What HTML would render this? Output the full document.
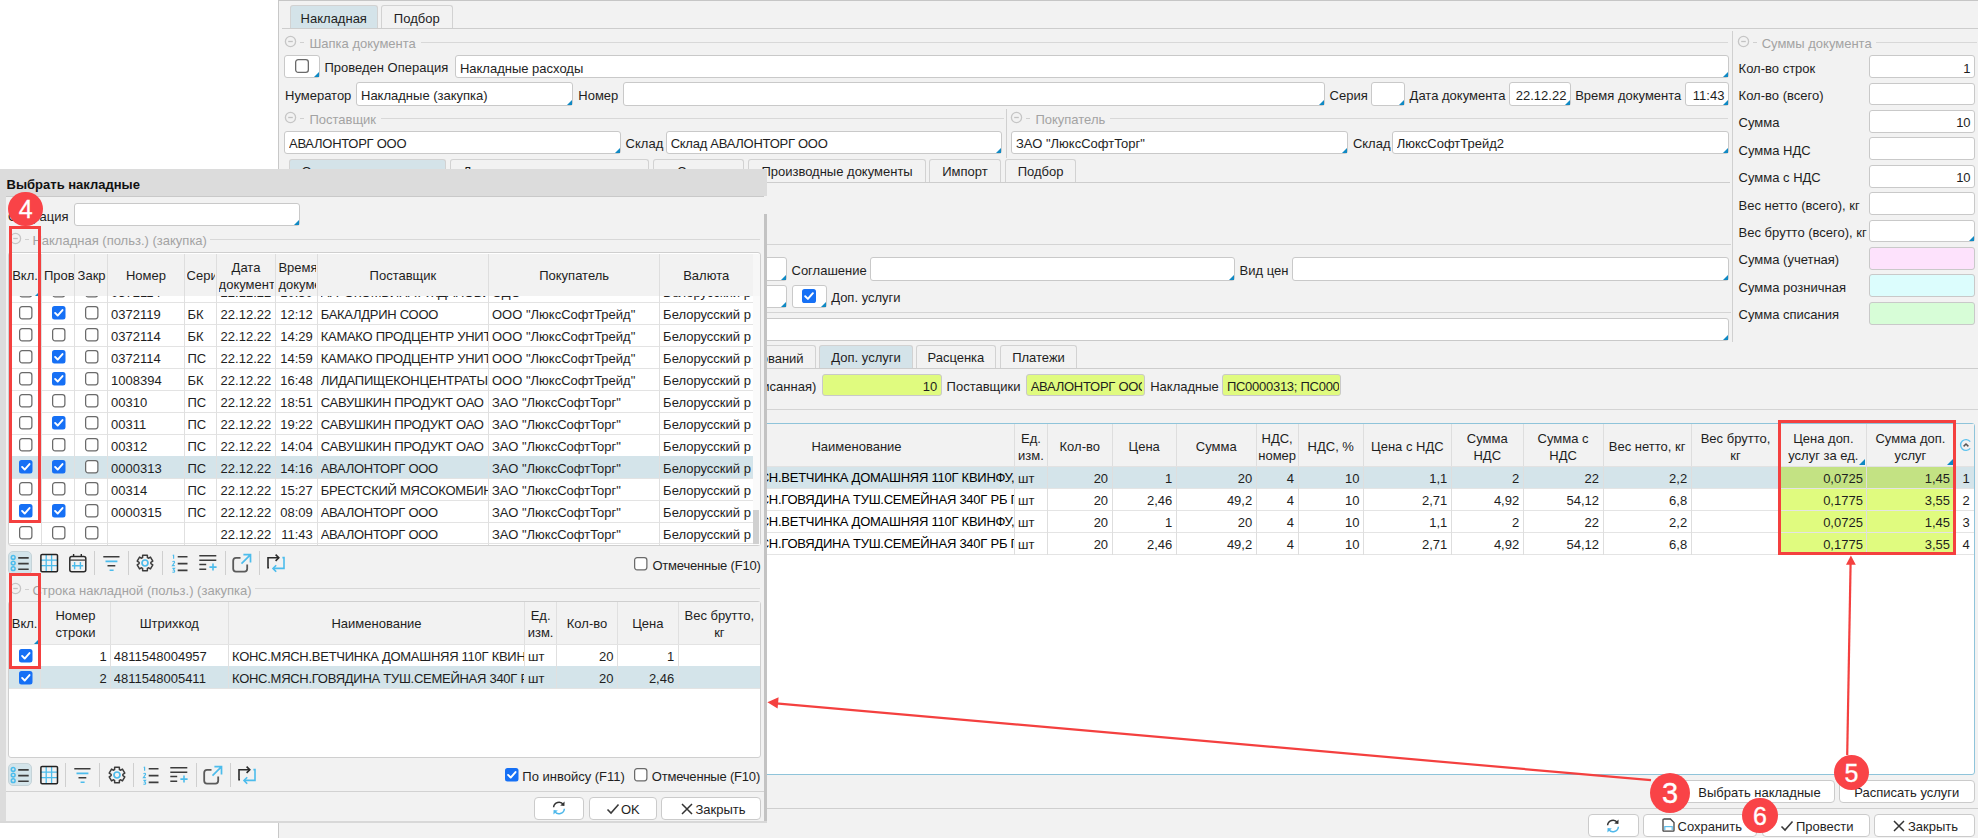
<!DOCTYPE html>
<html><head><meta charset="utf-8"><title>Выбрать накладные</title>
<style>
html,body{margin:0;padding:0;}
body{width:1978px;height:838px;overflow:hidden;position:relative;background:#fff;font-family:"Liberation Sans", sans-serif;font-size:13px;}
.a{position:absolute;}
.t{position:absolute;white-space:nowrap;line-height:22px;font-family:"Liberation Sans", sans-serif;}
svg.a{overflow:visible;}
</style></head><body>
<div class="a" style="left:278.00px;top:0.00px;width:1700.00px;height:838.00px;background:#f2f2f2;"></div>
<div class="a" style="left:278.00px;top:0.00px;width:1.00px;height:838.00px;background:#c8c8c8;"></div>
<div class="a" style="left:278.00px;top:0.00px;width:1700.00px;height:1.00px;background:#c6c6c6;"></div>
<div class="a" style="left:290.00px;top:5.00px;width:88.00px;height:24.00px;background:#d4e3e9;border:1px solid #d2d2d2;border-radius:3px 3px 0 0;border-bottom:none;box-sizing:border-box;"></div>
<div class="t" style="top:7.70px;font-size:13px;color:#1e1e1e;left:133.75px;width:400px;text-align:center;">Накладная</div>
<div class="a" style="left:381.00px;top:5.00px;width:72.00px;height:24.00px;background:#f2f2f2;border:1px solid #d2d2d2;border-radius:3px 3px 0 0;border-bottom:none;box-sizing:border-box;"></div>
<div class="t" style="top:7.70px;font-size:13px;color:#1e1e1e;left:216.75px;width:400px;text-align:center;">Подбор</div>
<div class="a" style="left:282.00px;top:28.00px;width:1696.00px;height:1.00px;background:#cdcdcd;"></div>
<svg class="a" style="left:284.30px;top:35.10px" width="13" height="13" viewBox="0 0 13 13"><circle cx="6.5" cy="6.5" r="5.1" fill="none" stroke="#c6c6c6" stroke-width="1.3"/><path d="M4.2 6.5 H8.8" stroke="#c2c2c2" stroke-width="1.3"/></svg>
<div class="a" style="left:300.00px;top:42.00px;width:4.00px;height:1.00px;background:#d0d0d0;"></div>
<div class="t" style="top:33.10px;font-size:13px;color:#a3a3a3;left:309.40px;">Шапка документа</div>
<div class="a" style="left:421.00px;top:42.00px;width:1307.00px;height:1.00px;background:#d8d8d8;"></div>
<div class="a" style="left:1732.00px;top:31.00px;width:1.00px;height:311.00px;background:#d0d0d0;"></div>
<svg class="a" style="left:1737.10px;top:35.10px" width="13" height="13" viewBox="0 0 13 13"><circle cx="6.5" cy="6.5" r="5.1" fill="none" stroke="#c6c6c6" stroke-width="1.3"/><path d="M4.2 6.5 H8.8" stroke="#c2c2c2" stroke-width="1.3"/></svg>
<div class="a" style="left:1753.00px;top:42.00px;width:4.00px;height:1.00px;background:#d0d0d0;"></div>
<div class="t" style="top:33.10px;font-size:13px;color:#a3a3a3;left:1761.70px;">Суммы документа</div>
<div class="a" style="left:1876.00px;top:42.00px;width:101.00px;height:1.00px;background:#d8d8d8;"></div>
<div class="a" style="left:284.00px;top:55.00px;width:36.00px;height:23.00px;background:#fff;border:1px solid #c9c9c9;border-radius:3px;box-sizing:border-box;"></div>
<div class="a" style="left:314.00px;top:72.00px;width:0;height:0;border-left:5px solid transparent;border-bottom:5px solid #0f89c4;"></div>
<svg class="a" style="left:295.30px;top:59.20px" width="14" height="14" viewBox="0 0 14 14"><rect x="0.65" y="0.65" width="12.7" height="12.7" rx="2.6" fill="#fff" stroke="#6a6a6a" stroke-width="1.3"/></svg>
<div class="t" style="top:57.40px;font-size:13px;color:#1e1e1e;left:324.50px;">Проведен Операция</div>
<div class="a" style="left:455.00px;top:55.00px;width:1274.00px;height:23.00px;background:#fff;border:1px solid #c9c9c9;border-radius:3px;box-sizing:border-box;"></div>
<div class="t" style="top:57.60px;font-size:13px;color:#1e1e1e;left:459.90px;width:1266.50px;overflow:hidden;">Накладные расходы</div>
<div class="a" style="left:1723.00px;top:72.00px;width:0;height:0;border-left:5px solid transparent;border-bottom:5px solid #0f89c4;"></div>
<div class="t" style="top:84.70px;font-size:13px;color:#1e1e1e;left:285.00px;">Нумератор</div>
<div class="a" style="left:356.00px;top:82.00px;width:217.00px;height:24.00px;background:#fff;border:1px solid #c9c9c9;border-radius:3px;box-sizing:border-box;"></div>
<div class="t" style="top:84.85px;font-size:13px;color:#1e1e1e;left:361.00px;width:209.30px;overflow:hidden;">Накладные (закупка)</div>
<div class="a" style="left:567.00px;top:100.00px;width:0;height:0;border-left:5px solid transparent;border-bottom:5px solid #0f89c4;"></div>
<div class="t" style="top:84.70px;font-size:13px;color:#1e1e1e;left:578.30px;">Номер</div>
<div class="a" style="left:623.00px;top:82.00px;width:702.00px;height:24.00px;background:#fff;border:1px solid #c9c9c9;border-radius:3px;box-sizing:border-box;"></div>
<div class="a" style="left:1319.00px;top:100.00px;width:0;height:0;border-left:5px solid transparent;border-bottom:5px solid #0f89c4;"></div>
<div class="t" style="top:84.70px;font-size:13px;color:#1e1e1e;left:1329.60px;">Серия</div>
<div class="a" style="left:1371.00px;top:82.00px;width:34.00px;height:24.00px;background:#fff;border:1px solid #c9c9c9;border-radius:3px;box-sizing:border-box;"></div>
<div class="a" style="left:1399.00px;top:100.00px;width:0;height:0;border-left:5px solid transparent;border-bottom:5px solid #0f89c4;"></div>
<div class="t" style="top:84.70px;font-size:13px;color:#1e1e1e;left:1409.60px;">Дата документа</div>
<div class="a" style="left:1509.00px;top:82.00px;width:62.00px;height:24.00px;background:#fff;border:1px solid #c9c9c9;border-radius:3px;box-sizing:border-box;"></div>
<div class="t" style="top:84.85px;font-size:13px;color:#1e1e1e;left:1166.40px;width:400px;text-align:right;">22.12.22</div>
<div class="a" style="left:1565.00px;top:100.00px;width:0;height:0;border-left:5px solid transparent;border-bottom:5px solid #0f89c4;"></div>
<div class="t" style="top:84.70px;font-size:13px;color:#1e1e1e;left:1575.20px;">Время документа</div>
<div class="a" style="left:1685.00px;top:82.00px;width:44.00px;height:24.00px;background:#fff;border:1px solid #c9c9c9;border-radius:3px;box-sizing:border-box;"></div>
<div class="t" style="top:84.85px;font-size:13px;color:#1e1e1e;left:1324.40px;width:400px;text-align:right;">11:43</div>
<div class="a" style="left:1723.00px;top:100.00px;width:0;height:0;border-left:5px solid transparent;border-bottom:5px solid #0f89c4;"></div>
<svg class="a" style="left:284.30px;top:111.40px" width="13" height="13" viewBox="0 0 13 13"><circle cx="6.5" cy="6.5" r="5.1" fill="none" stroke="#c6c6c6" stroke-width="1.3"/><path d="M4.2 6.5 H8.8" stroke="#c2c2c2" stroke-width="1.3"/></svg>
<div class="a" style="left:300.00px;top:118.00px;width:4.00px;height:1.00px;background:#d0d0d0;"></div>
<div class="t" style="top:109.40px;font-size:13px;color:#a3a3a3;left:309.40px;">Поставщик</div>
<div class="a" style="left:381.00px;top:118.00px;width:623.00px;height:1.00px;background:#d8d8d8;"></div>
<div class="a" style="left:1006.00px;top:109.00px;width:1.00px;height:49.00px;background:#d0d0d0;"></div>
<svg class="a" style="left:1010.40px;top:111.40px" width="13" height="13" viewBox="0 0 13 13"><circle cx="6.5" cy="6.5" r="5.1" fill="none" stroke="#c6c6c6" stroke-width="1.3"/><path d="M4.2 6.5 H8.8" stroke="#c2c2c2" stroke-width="1.3"/></svg>
<div class="a" style="left:1026.00px;top:118.00px;width:4.00px;height:1.00px;background:#d0d0d0;"></div>
<div class="t" style="top:109.40px;font-size:13px;color:#a3a3a3;left:1035.40px;">Покупатель</div>
<div class="a" style="left:1110.00px;top:118.00px;width:618.00px;height:1.00px;background:#d8d8d8;"></div>
<div class="a" style="left:284.00px;top:131.00px;width:337.00px;height:23.00px;background:#fff;border:1px solid #c9c9c9;border-radius:3px;box-sizing:border-box;"></div>
<div class="t" style="top:133.40px;font-size:13px;color:#1e1e1e;letter-spacing:-0.27px;left:289.00px;width:329.30px;overflow:hidden;">АВАЛОНТОРГ ООО</div>
<div class="a" style="left:615.00px;top:148.00px;width:0;height:0;border-left:5px solid transparent;border-bottom:5px solid #0f89c4;"></div>
<div class="t" style="top:133.40px;font-size:13px;color:#1e1e1e;left:625.60px;">Склад</div>
<div class="a" style="left:666.00px;top:131.00px;width:336.00px;height:23.00px;background:#fff;border:1px solid #c9c9c9;border-radius:3px;box-sizing:border-box;"></div>
<div class="t" style="top:133.40px;font-size:13px;color:#1e1e1e;letter-spacing:-0.27px;left:670.70px;width:329.00px;overflow:hidden;">Склад АВАЛОНТОРГ ООО</div>
<div class="a" style="left:996.00px;top:148.00px;width:0;height:0;border-left:5px solid transparent;border-bottom:5px solid #0f89c4;"></div>
<div class="a" style="left:1011.00px;top:131.00px;width:337.00px;height:23.00px;background:#fff;border:1px solid #c9c9c9;border-radius:3px;box-sizing:border-box;"></div>
<div class="t" style="top:133.40px;font-size:13px;color:#1e1e1e;left:1016.00px;width:329.50px;overflow:hidden;">ЗАО "ЛюксСофтТорг"</div>
<div class="a" style="left:1342.00px;top:148.00px;width:0;height:0;border-left:5px solid transparent;border-bottom:5px solid #0f89c4;"></div>
<div class="t" style="top:133.40px;font-size:13px;color:#1e1e1e;left:1352.90px;">Склад</div>
<div class="a" style="left:1392.00px;top:131.00px;width:337.00px;height:23.00px;background:#fff;border:1px solid #c9c9c9;border-radius:3px;box-sizing:border-box;"></div>
<div class="t" style="top:133.40px;font-size:13px;color:#1e1e1e;left:1396.70px;width:329.70px;overflow:hidden;">ЛюксСофтТрейд2</div>
<div class="a" style="left:1723.00px;top:148.00px;width:0;height:0;border-left:5px solid transparent;border-bottom:5px solid #0f89c4;"></div>
<div class="a" style="left:289.00px;top:159.00px;width:157.00px;height:24.00px;background:#d4e3e9;border:1px solid #d2d2d2;border-radius:3px 3px 0 0;border-bottom:none;box-sizing:border-box;"></div>
<div class="t" style="top:161.45px;font-size:13px;color:#1e1e1e;left:167.60px;width:400px;text-align:center;">Основные параметры</div>
<div class="a" style="left:450.00px;top:159.00px;width:199.00px;height:24.00px;background:#f2f2f2;border:1px solid #d2d2d2;border-radius:3px 3px 0 0;border-bottom:none;box-sizing:border-box;"></div>
<div class="t" style="top:161.45px;font-size:13px;color:#1e1e1e;left:349.40px;width:400px;text-align:center;">Дополнительные параметры</div>
<div class="a" style="left:653.00px;top:159.00px;width:91.00px;height:24.00px;background:#f2f2f2;border:1px solid #d2d2d2;border-radius:3px 3px 0 0;border-bottom:none;box-sizing:border-box;"></div>
<div class="t" style="top:161.45px;font-size:13px;color:#1e1e1e;left:498.50px;width:400px;text-align:center;">Скидки</div>
<div class="a" style="left:748.00px;top:159.00px;width:178.00px;height:24.00px;background:#f2f2f2;border:1px solid #d2d2d2;border-radius:3px 3px 0 0;border-bottom:none;box-sizing:border-box;"></div>
<div class="t" style="top:161.45px;font-size:13px;color:#1e1e1e;left:637.05px;width:400px;text-align:center;">Производные документы</div>
<div class="a" style="left:929.00px;top:159.00px;width:72.00px;height:24.00px;background:#f2f2f2;border:1px solid #d2d2d2;border-radius:3px 3px 0 0;border-bottom:none;box-sizing:border-box;"></div>
<div class="t" style="top:161.45px;font-size:13px;color:#1e1e1e;left:765.00px;width:400px;text-align:center;">Импорт</div>
<div class="a" style="left:1005.00px;top:159.00px;width:71.00px;height:24.00px;background:#f2f2f2;border:1px solid #d2d2d2;border-radius:3px 3px 0 0;border-bottom:none;box-sizing:border-box;"></div>
<div class="t" style="top:161.45px;font-size:13px;color:#1e1e1e;left:840.60px;width:400px;text-align:center;">Подбор</div>
<div class="a" style="left:282.00px;top:182.00px;width:1448.00px;height:1.00px;background:#cdcdcd;"></div>
<div class="t" style="top:57.65px;font-size:13px;color:#1e1e1e;left:1738.60px;">Кол-во строк</div>
<div class="a" style="left:1869.00px;top:55.00px;width:106.00px;height:23.00px;background:#fff;border:1px solid #c9c9c9;border-radius:3px;box-sizing:border-box;"></div>
<div class="t" style="top:57.55px;font-size:13px;color:#1e1e1e;left:1570.60px;width:400px;text-align:right;">1</div>
<div class="t" style="top:85.05px;font-size:13px;color:#1e1e1e;left:1738.60px;">Кол-во (всего)</div>
<div class="a" style="left:1869.00px;top:83.00px;width:106.00px;height:22.00px;background:#fff;border:1px solid #c9c9c9;border-radius:3px;box-sizing:border-box;"></div>
<div class="t" style="top:112.45px;font-size:13px;color:#1e1e1e;left:1738.60px;">Сумма</div>
<div class="a" style="left:1869.00px;top:110.00px;width:106.00px;height:23.00px;background:#fff;border:1px solid #c9c9c9;border-radius:3px;box-sizing:border-box;"></div>
<div class="t" style="top:112.35px;font-size:13px;color:#1e1e1e;left:1570.60px;width:400px;text-align:right;">10</div>
<div class="t" style="top:139.85px;font-size:13px;color:#1e1e1e;left:1738.60px;">Сумма НДС</div>
<div class="a" style="left:1869.00px;top:137.00px;width:106.00px;height:23.00px;background:#fff;border:1px solid #c9c9c9;border-radius:3px;box-sizing:border-box;"></div>
<div class="t" style="top:167.25px;font-size:13px;color:#1e1e1e;left:1738.60px;">Сумма с НДС</div>
<div class="a" style="left:1869.00px;top:165.00px;width:106.00px;height:23.00px;background:#fff;border:1px solid #c9c9c9;border-radius:3px;box-sizing:border-box;"></div>
<div class="t" style="top:167.15px;font-size:13px;color:#1e1e1e;left:1570.60px;width:400px;text-align:right;">10</div>
<div class="t" style="top:194.65px;font-size:13px;color:#1e1e1e;left:1738.60px;">Вес нетто (всего), кг</div>
<div class="a" style="left:1869.00px;top:192.00px;width:106.00px;height:23.00px;background:#fff;border:1px solid #c9c9c9;border-radius:3px;box-sizing:border-box;"></div>
<div class="t" style="top:222.05px;font-size:13px;color:#1e1e1e;left:1738.60px;">Вес брутто (всего), кг</div>
<div class="a" style="left:1869.00px;top:220.00px;width:106.00px;height:22.00px;background:#fff;border:1px solid #c9c9c9;border-radius:3px;box-sizing:border-box;"></div>
<div class="a" style="left:1969.00px;top:236.00px;width:0;height:0;border-left:5px solid transparent;border-bottom:5px solid #0f89c4;"></div>
<div class="t" style="top:249.45px;font-size:13px;color:#1e1e1e;left:1738.60px;">Сумма (учетная)</div>
<div class="a" style="left:1869.00px;top:247.00px;width:106.00px;height:23.00px;background:#fde2fc;border:1px solid #c9c9c9;border-radius:3px;box-sizing:border-box;"></div>
<div class="t" style="top:276.85px;font-size:13px;color:#1e1e1e;left:1738.60px;">Сумма розничная</div>
<div class="a" style="left:1869.00px;top:274.00px;width:106.00px;height:23.00px;background:#dcfdfd;border:1px solid #c9c9c9;border-radius:3px;box-sizing:border-box;"></div>
<div class="t" style="top:304.25px;font-size:13px;color:#1e1e1e;left:1738.60px;">Сумма списания</div>
<div class="a" style="left:1869.00px;top:302.00px;width:106.00px;height:23.00px;background:#d7fdd7;border:1px solid #c9c9c9;border-radius:3px;box-sizing:border-box;"></div>
<div class="a" style="left:766.00px;top:244.00px;width:965.00px;height:1.00px;background:#d4d4d4;"></div>
<div class="a" style="left:700.00px;top:257.00px;width:87.00px;height:24.00px;background:#fff;border:1px solid #c9c9c9;border-radius:3px;box-sizing:border-box;"></div>
<div class="a" style="left:781.00px;top:275.00px;width:0;height:0;border-left:5px solid transparent;border-bottom:5px solid #0f89c4;"></div>
<div class="t" style="top:259.60px;font-size:13px;color:#1e1e1e;left:791.50px;">Соглашение</div>
<div class="a" style="left:870.00px;top:257.00px;width:365.00px;height:24.00px;background:#fff;border:1px solid #c9c9c9;border-radius:3px;box-sizing:border-box;"></div>
<div class="a" style="left:1229.00px;top:275.00px;width:0;height:0;border-left:5px solid transparent;border-bottom:5px solid #0f89c4;"></div>
<div class="t" style="top:259.60px;font-size:13px;color:#1e1e1e;left:1239.60px;">Вид цен</div>
<div class="a" style="left:1292.00px;top:257.00px;width:437.00px;height:24.00px;background:#fff;border:1px solid #c9c9c9;border-radius:3px;box-sizing:border-box;"></div>
<div class="a" style="left:1723.00px;top:275.00px;width:0;height:0;border-left:5px solid transparent;border-bottom:5px solid #0f89c4;"></div>
<div class="a" style="left:700.00px;top:285.00px;width:87.00px;height:23.00px;background:#fff;border:1px solid #c9c9c9;border-radius:3px;box-sizing:border-box;"></div>
<div class="a" style="left:781.00px;top:302.00px;width:0;height:0;border-left:5px solid transparent;border-bottom:5px solid #0f89c4;"></div>
<div class="a" style="left:792.00px;top:285.00px;width:35.00px;height:23.00px;background:#fff;border:1px solid #c9c9c9;border-radius:3px;box-sizing:border-box;"></div>
<div class="a" style="left:821.00px;top:302.00px;width:0;height:0;border-left:5px solid transparent;border-bottom:5px solid #0f89c4;"></div>
<svg class="a" style="left:802.10px;top:289.10px" width="14" height="14" viewBox="0 0 14 14"><rect x="0" y="0" width="14" height="14" rx="2.6" fill="#1670f5"/><path d="M3.2 7.2 L5.9 9.9 L10.9 4.2" stroke="#fff" stroke-width="2" fill="none" stroke-linecap="round" stroke-linejoin="round"/></svg>
<div class="t" style="top:287.30px;font-size:13px;color:#1e1e1e;left:831.20px;">Доп. услуги</div>
<div class="a" style="left:766.00px;top:312.00px;width:965.00px;height:1.00px;background:#d4d4d4;"></div>
<div class="a" style="left:700.00px;top:318.00px;width:1029.00px;height:23.00px;background:#fff;border:1px solid #c9c9c9;border-radius:3px;box-sizing:border-box;"></div>
<div class="a" style="left:1723.00px;top:335.00px;width:0;height:0;border-left:5px solid transparent;border-bottom:5px solid #0f89c4;"></div>
<div class="a" style="left:700.00px;top:345.00px;width:116.00px;height:24.00px;background:#f2f2f2;border:1px solid #d2d2d2;border-radius:3px 3px 0 0;border-bottom:none;box-sizing:border-box;"></div>
<div class="t" style="top:347.50px;font-size:13px;color:#1e1e1e;left:403.60px;width:400px;text-align:right;">Список наименований</div>
<div class="a" style="left:819.00px;top:345.00px;width:94.00px;height:24.00px;background:#d4e3e9;border:1px solid #d2d2d2;border-radius:3px 3px 0 0;border-bottom:none;box-sizing:border-box;"></div>
<div class="t" style="top:347.45px;font-size:13px;color:#1e1e1e;left:666.05px;width:400px;text-align:center;">Доп. услуги</div>
<div class="a" style="left:916.00px;top:345.00px;width:80.00px;height:24.00px;background:#f2f2f2;border:1px solid #d2d2d2;border-radius:3px 3px 0 0;border-bottom:none;box-sizing:border-box;"></div>
<div class="t" style="top:347.45px;font-size:13px;color:#1e1e1e;left:755.90px;width:400px;text-align:center;">Расценка</div>
<div class="a" style="left:1000.00px;top:345.00px;width:77.00px;height:24.00px;background:#f2f2f2;border:1px solid #d2d2d2;border-radius:3px 3px 0 0;border-bottom:none;box-sizing:border-box;"></div>
<div class="t" style="top:347.45px;font-size:13px;color:#1e1e1e;left:838.50px;width:400px;text-align:center;">Платежи</div>
<div class="a" style="left:766.00px;top:368.00px;width:1212.00px;height:1.00px;background:#cdcdcd;"></div>
<div class="t" style="top:376.40px;font-size:13px;color:#1e1e1e;left:416.30px;width:400px;text-align:right;">Сумма (расписанная)</div>
<div class="a" style="left:822.00px;top:374.00px;width:120.00px;height:22.00px;background:#e0fb7f;border:1px solid #c9c9c9;border-radius:3px;box-sizing:border-box;"></div>
<div class="t" style="top:376.20px;font-size:13px;color:#1e1e1e;left:537.20px;width:400px;text-align:right;">10</div>
<div class="t" style="top:376.40px;font-size:13px;color:#1e1e1e;left:946.60px;">Поставщики</div>
<div class="a" style="left:1026.00px;top:374.00px;width:119.00px;height:22.00px;background:#e0fb7f;border:1px solid #c9c9c9;border-radius:3px;box-sizing:border-box;"></div>
<div class="t" style="top:376.20px;font-size:13px;color:#1e1e1e;letter-spacing:-0.27px;left:1030.70px;width:111.60px;overflow:hidden;">АВАЛОНТОРГ ООО</div>
<div class="t" style="top:376.40px;font-size:13px;color:#1e1e1e;left:1150.20px;">Накладные</div>
<div class="a" style="left:1222.00px;top:374.00px;width:119.00px;height:22.00px;background:#e0fb7f;border:1px solid #c9c9c9;border-radius:3px;box-sizing:border-box;"></div>
<div class="t" style="top:376.20px;font-size:13px;color:#1e1e1e;letter-spacing:-0.27px;left:1226.90px;width:111.80px;overflow:hidden;">ПС0000313; ПС0000315</div>
<div class="a" style="left:766.00px;top:409.00px;width:1212.00px;height:1.00px;background:#d4d4d4;"></div>
<div class="a" style="left:500.00px;top:423.00px;width:1475.00px;height:352.00px;background:#fff;border:1px solid #8fc4da;border-radius:3px;box-sizing:border-box;"></div>
<div class="a" style="left:501.00px;top:424.00px;width:1473.00px;height:43.00px;background:#f2f2f2;"></div>
<div class="a" style="left:501.00px;top:467.00px;width:1473.00px;height:22.00px;background:#d4e4ea;"></div>
<div class="a" style="left:1780.00px;top:467.00px;width:174.00px;height:22.00px;background:#c3e283;"></div>
<div class="a" style="left:501.00px;top:488.00px;width:1473.00px;height:1.00px;background:#e4e4e4;"></div>
<div class="t" style="left:700px;top:467.40px;width:314.20px;overflow:hidden;"><span style="position:relative;left:1.3px;letter-spacing:-0.25px">КОНС.МЯСН.ВЕТЧИНКА ДОМАШНЯЯ 110Г КВИНФУ, ГП</span></div>
<div class="t" style="top:468.30px;font-size:13px;color:#1e1e1e;left:1018.10px;">шт</div>
<div class="t" style="top:468.30px;font-size:13px;color:#1e1e1e;left:708.10px;width:400px;text-align:right;">20</div>
<div class="t" style="top:468.30px;font-size:13px;color:#1e1e1e;left:772.30px;width:400px;text-align:right;">1</div>
<div class="t" style="top:468.30px;font-size:13px;color:#1e1e1e;left:852.20px;width:400px;text-align:right;">20</div>
<div class="t" style="top:468.30px;font-size:13px;color:#1e1e1e;left:894.10px;width:400px;text-align:right;">4</div>
<div class="t" style="top:468.30px;font-size:13px;color:#1e1e1e;left:959.40px;width:400px;text-align:right;">10</div>
<div class="t" style="top:468.30px;font-size:13px;color:#1e1e1e;left:1047.30px;width:400px;text-align:right;">1,1</div>
<div class="t" style="top:468.30px;font-size:13px;color:#1e1e1e;left:1119.20px;width:400px;text-align:right;">2</div>
<div class="t" style="top:468.30px;font-size:13px;color:#1e1e1e;left:1199.00px;width:400px;text-align:right;">22</div>
<div class="t" style="top:468.30px;font-size:13px;color:#1e1e1e;left:1287.20px;width:400px;text-align:right;">2,2</div>
<div class="t" style="top:468.30px;font-size:13px;color:#1e1e1e;left:1462.90px;width:400px;text-align:right;">0,0725</div>
<div class="t" style="top:468.30px;font-size:13px;color:#1e1e1e;left:1550.00px;width:400px;text-align:right;">1,45</div>
<div class="t" style="top:468.30px;font-size:13px;color:#1e1e1e;left:1962.50px;">1</div>
<div class="a" style="left:1780.00px;top:489.00px;width:174.00px;height:22.00px;background:#e0fb7f;"></div>
<div class="a" style="left:501.00px;top:510.00px;width:1473.00px;height:1.00px;background:#e4e4e4;"></div>
<div class="t" style="left:700px;top:489.40px;width:314.20px;overflow:hidden;"><span style="position:relative;left:1.3px;letter-spacing:-0.25px">КОНС.МЯСН.ГОВЯДИНА ТУШ.СЕМЕЙНАЯ 340Г РБ ГР</span></div>
<div class="t" style="top:490.30px;font-size:13px;color:#1e1e1e;left:1018.10px;">шт</div>
<div class="t" style="top:490.30px;font-size:13px;color:#1e1e1e;left:708.10px;width:400px;text-align:right;">20</div>
<div class="t" style="top:490.30px;font-size:13px;color:#1e1e1e;left:772.30px;width:400px;text-align:right;">2,46</div>
<div class="t" style="top:490.30px;font-size:13px;color:#1e1e1e;left:852.20px;width:400px;text-align:right;">49,2</div>
<div class="t" style="top:490.30px;font-size:13px;color:#1e1e1e;left:894.10px;width:400px;text-align:right;">4</div>
<div class="t" style="top:490.30px;font-size:13px;color:#1e1e1e;left:959.40px;width:400px;text-align:right;">10</div>
<div class="t" style="top:490.30px;font-size:13px;color:#1e1e1e;left:1047.30px;width:400px;text-align:right;">2,71</div>
<div class="t" style="top:490.30px;font-size:13px;color:#1e1e1e;left:1119.20px;width:400px;text-align:right;">4,92</div>
<div class="t" style="top:490.30px;font-size:13px;color:#1e1e1e;left:1199.00px;width:400px;text-align:right;">54,12</div>
<div class="t" style="top:490.30px;font-size:13px;color:#1e1e1e;left:1287.20px;width:400px;text-align:right;">6,8</div>
<div class="t" style="top:490.30px;font-size:13px;color:#1e1e1e;left:1462.90px;width:400px;text-align:right;">0,1775</div>
<div class="t" style="top:490.30px;font-size:13px;color:#1e1e1e;left:1550.00px;width:400px;text-align:right;">3,55</div>
<div class="t" style="top:490.30px;font-size:13px;color:#1e1e1e;left:1962.50px;">2</div>
<div class="a" style="left:1780.00px;top:511.00px;width:174.00px;height:22.00px;background:#e0fb7f;"></div>
<div class="a" style="left:501.00px;top:532.00px;width:1473.00px;height:1.00px;background:#e4e4e4;"></div>
<div class="t" style="left:700px;top:511.40px;width:314.20px;overflow:hidden;"><span style="position:relative;left:1.3px;letter-spacing:-0.25px">КОНС.МЯСН.ВЕТЧИНКА ДОМАШНЯЯ 110Г КВИНФУ, ГП</span></div>
<div class="t" style="top:512.30px;font-size:13px;color:#1e1e1e;left:1018.10px;">шт</div>
<div class="t" style="top:512.30px;font-size:13px;color:#1e1e1e;left:708.10px;width:400px;text-align:right;">20</div>
<div class="t" style="top:512.30px;font-size:13px;color:#1e1e1e;left:772.30px;width:400px;text-align:right;">1</div>
<div class="t" style="top:512.30px;font-size:13px;color:#1e1e1e;left:852.20px;width:400px;text-align:right;">20</div>
<div class="t" style="top:512.30px;font-size:13px;color:#1e1e1e;left:894.10px;width:400px;text-align:right;">4</div>
<div class="t" style="top:512.30px;font-size:13px;color:#1e1e1e;left:959.40px;width:400px;text-align:right;">10</div>
<div class="t" style="top:512.30px;font-size:13px;color:#1e1e1e;left:1047.30px;width:400px;text-align:right;">1,1</div>
<div class="t" style="top:512.30px;font-size:13px;color:#1e1e1e;left:1119.20px;width:400px;text-align:right;">2</div>
<div class="t" style="top:512.30px;font-size:13px;color:#1e1e1e;left:1199.00px;width:400px;text-align:right;">22</div>
<div class="t" style="top:512.30px;font-size:13px;color:#1e1e1e;left:1287.20px;width:400px;text-align:right;">2,2</div>
<div class="t" style="top:512.30px;font-size:13px;color:#1e1e1e;left:1462.90px;width:400px;text-align:right;">0,0725</div>
<div class="t" style="top:512.30px;font-size:13px;color:#1e1e1e;left:1550.00px;width:400px;text-align:right;">1,45</div>
<div class="t" style="top:512.30px;font-size:13px;color:#1e1e1e;left:1962.50px;">3</div>
<div class="a" style="left:1780.00px;top:533.00px;width:174.00px;height:22.00px;background:#e0fb7f;"></div>
<div class="a" style="left:501.00px;top:554.00px;width:1473.00px;height:1.00px;background:#e4e4e4;"></div>
<div class="t" style="left:700px;top:533.40px;width:314.20px;overflow:hidden;"><span style="position:relative;left:1.3px;letter-spacing:-0.25px">КОНС.МЯСН.ГОВЯДИНА ТУШ.СЕМЕЙНАЯ 340Г РБ ГР</span></div>
<div class="t" style="top:534.30px;font-size:13px;color:#1e1e1e;left:1018.10px;">шт</div>
<div class="t" style="top:534.30px;font-size:13px;color:#1e1e1e;left:708.10px;width:400px;text-align:right;">20</div>
<div class="t" style="top:534.30px;font-size:13px;color:#1e1e1e;left:772.30px;width:400px;text-align:right;">2,46</div>
<div class="t" style="top:534.30px;font-size:13px;color:#1e1e1e;left:852.20px;width:400px;text-align:right;">49,2</div>
<div class="t" style="top:534.30px;font-size:13px;color:#1e1e1e;left:894.10px;width:400px;text-align:right;">4</div>
<div class="t" style="top:534.30px;font-size:13px;color:#1e1e1e;left:959.40px;width:400px;text-align:right;">10</div>
<div class="t" style="top:534.30px;font-size:13px;color:#1e1e1e;left:1047.30px;width:400px;text-align:right;">2,71</div>
<div class="t" style="top:534.30px;font-size:13px;color:#1e1e1e;left:1119.20px;width:400px;text-align:right;">4,92</div>
<div class="t" style="top:534.30px;font-size:13px;color:#1e1e1e;left:1199.00px;width:400px;text-align:right;">54,12</div>
<div class="t" style="top:534.30px;font-size:13px;color:#1e1e1e;left:1287.20px;width:400px;text-align:right;">6,8</div>
<div class="t" style="top:534.30px;font-size:13px;color:#1e1e1e;left:1462.90px;width:400px;text-align:right;">0,1775</div>
<div class="t" style="top:534.30px;font-size:13px;color:#1e1e1e;left:1550.00px;width:400px;text-align:right;">3,55</div>
<div class="t" style="top:534.30px;font-size:13px;color:#1e1e1e;left:1962.50px;">4</div>
<div class="a" style="left:1014.00px;top:424.00px;width:1.00px;height:131.00px;background:#dedede;"></div>
<div class="a" style="left:1047.00px;top:424.00px;width:1.00px;height:131.00px;background:#dedede;"></div>
<div class="a" style="left:1112.00px;top:424.00px;width:1.00px;height:131.00px;background:#dedede;"></div>
<div class="a" style="left:1176.00px;top:424.00px;width:1.00px;height:131.00px;background:#dedede;"></div>
<div class="a" style="left:1256.00px;top:424.00px;width:1.00px;height:131.00px;background:#dedede;"></div>
<div class="a" style="left:1298.00px;top:424.00px;width:1.00px;height:131.00px;background:#dedede;"></div>
<div class="a" style="left:1363.00px;top:424.00px;width:1.00px;height:131.00px;background:#dedede;"></div>
<div class="a" style="left:1451.00px;top:424.00px;width:1.00px;height:131.00px;background:#dedede;"></div>
<div class="a" style="left:1523.00px;top:424.00px;width:1.00px;height:131.00px;background:#dedede;"></div>
<div class="a" style="left:1603.00px;top:424.00px;width:1.00px;height:131.00px;background:#dedede;"></div>
<div class="a" style="left:1691.00px;top:424.00px;width:1.00px;height:131.00px;background:#dedede;"></div>
<div class="a" style="left:1779.00px;top:424.00px;width:1.00px;height:131.00px;background:#dedede;"></div>
<div class="a" style="left:1866.00px;top:424.00px;width:1.00px;height:131.00px;background:#dedede;"></div>
<div class="a" style="left:1954.00px;top:424.00px;width:1.00px;height:131.00px;background:#dedede;"></div>
<div class="a" style="left:501.00px;top:466.00px;width:1473.00px;height:1.00px;background:#e2e2e2;"></div>
<div class="t" style="top:435.60px;font-size:13px;color:#1e1e1e;left:656.50px;width:400px;text-align:center;">Наименование</div>
<div class="t" style="top:427.60px;font-size:13px;color:#1e1e1e;left:831.00px;width:400px;text-align:center;">Ед.</div>
<div class="t" style="top:444.60px;font-size:13px;color:#1e1e1e;left:831.00px;width:400px;text-align:center;">изм.</div>
<div class="t" style="top:435.60px;font-size:13px;color:#1e1e1e;left:879.75px;width:400px;text-align:center;">Кол-во</div>
<div class="t" style="top:435.60px;font-size:13px;color:#1e1e1e;left:944.20px;width:400px;text-align:center;">Цена</div>
<div class="t" style="top:435.60px;font-size:13px;color:#1e1e1e;left:1016.25px;width:400px;text-align:center;">Сумма</div>
<div class="a" style="left:1257.2px;top:424px;width:40.4px;height:42px;overflow:hidden">
<div class="t" style="top:3.60px;font-size:13px;color:#1e1e1e;left:-180.05px;width:400px;text-align:center;">НДС,</div>
<div class="t" style="top:20.60px;font-size:13px;color:#1e1e1e;left:-180.05px;width:400px;text-align:center;">номер</div>
</div>
<div class="t" style="top:435.60px;font-size:13px;color:#1e1e1e;left:1130.75px;width:400px;text-align:center;">НДС, %</div>
<div class="t" style="top:435.60px;font-size:13px;color:#1e1e1e;left:1207.35px;width:400px;text-align:center;">Цена с НДС</div>
<div class="t" style="top:427.60px;font-size:13px;color:#1e1e1e;left:1287.25px;width:400px;text-align:center;">Сумма</div>
<div class="t" style="top:444.60px;font-size:13px;color:#1e1e1e;left:1287.25px;width:400px;text-align:center;">НДС</div>
<div class="t" style="top:427.60px;font-size:13px;color:#1e1e1e;left:1363.10px;width:400px;text-align:center;">Сумма с</div>
<div class="t" style="top:444.60px;font-size:13px;color:#1e1e1e;left:1363.10px;width:400px;text-align:center;">НДС</div>
<div class="t" style="top:435.60px;font-size:13px;color:#1e1e1e;left:1447.10px;width:400px;text-align:center;">Вес нетто, кг</div>
<div class="t" style="top:427.60px;font-size:13px;color:#1e1e1e;left:1535.50px;width:400px;text-align:center;">Вес брутто,</div>
<div class="t" style="top:444.60px;font-size:13px;color:#1e1e1e;left:1535.50px;width:400px;text-align:center;">кг</div>
<div class="t" style="top:427.60px;font-size:13px;color:#1e1e1e;left:1623.35px;width:400px;text-align:center;">Цена доп.</div>
<div class="t" style="top:444.60px;font-size:13px;color:#1e1e1e;left:1623.35px;width:400px;text-align:center;">услуг за ед.</div>
<div class="t" style="top:427.60px;font-size:13px;color:#1e1e1e;left:1710.45px;width:400px;text-align:center;">Сумма доп.</div>
<div class="t" style="top:444.60px;font-size:13px;color:#1e1e1e;left:1710.45px;width:400px;text-align:center;">услуг</div>
<div class="a" style="left:1859.40px;top:459.10px;width:0;height:0;border-left:6px solid transparent;border-bottom:6px solid #0f89c4;"></div>
<div class="a" style="left:1946.50px;top:459.10px;width:0;height:0;border-left:6px solid transparent;border-bottom:6px solid #0f89c4;"></div>
<svg class="a" style="left:1959px;top:438px" width="14" height="14" viewBox="0 0 14 14"><path d="M11.2 3.6 A5.4 5.4 0 1 0 11.2 10.4" fill="none" stroke="#5ec3ee" stroke-width="1.4"/><path d="M4.6 8.4 L7 6 L9.4 8.4" fill="none" stroke="#555" stroke-width="1.5"/></svg>
<div class="a" style="left:1655.00px;top:780.00px;width:180.00px;height:23.00px;background:#fff;border:1px solid #cbcbcb;border-radius:4px;box-sizing:border-box;"></div>
<div class="t" style="top:782.35px;font-size:13px;color:#1e1e1e;left:1698.30px;">Выбрать накладные</div>
<div class="a" style="left:1839.00px;top:780.00px;width:136.00px;height:23.00px;background:#fff;border:1px solid #cbcbcb;border-radius:4px;box-sizing:border-box;"></div>
<div class="t" style="top:782.35px;font-size:13px;color:#1e1e1e;left:1706.85px;width:400px;text-align:center;">Расписать услуги</div>
<div class="a" style="left:766.00px;top:808.00px;width:1212.00px;height:1.00px;background:#cfcfcf;"></div>
<div class="a" style="left:1588.00px;top:814.00px;width:51.00px;height:23.00px;background:#fff;border:1px solid #cbcbcb;border-radius:4px;box-sizing:border-box;"></div>
<svg class="a" style="left:1605.40px;top:817.50px" width="16" height="16" viewBox="0 0 16 16"><path d="M2.6 7.2 A5.4 5.4 0 0 1 12.4 4.6" fill="none" stroke="#333" stroke-width="1.5"/><path d="M13.6 1.6 L13.4 6 L9.2 5.6 Z" fill="#333"/><path d="M13.4 8.8 A5.4 5.4 0 0 1 3.6 11.4" fill="none" stroke="#4fb8ea" stroke-width="1.5"/><path d="M2.4 14.4 L2.6 10 L6.8 10.4 Z" fill="#4fb8ea"/></svg>
<div class="a" style="left:1643.00px;top:814.00px;width:114.00px;height:23.00px;background:#fff;border:1px solid #cbcbcb;border-radius:4px;box-sizing:border-box;"></div>
<div class="t" style="top:816.40px;font-size:13px;color:#1e1e1e;left:1677.50px;">Сохранить</div>
<svg class="a" style="left:1662.20px;top:818.10px" width="13" height="14" viewBox="0 0 13 14"><path d="M1.6 1 H8.4 L12 4.6 V12.4 Q12 13.2 11.2 13.2 H1.8 Q1 13.2 1 12.4 V1.8 Q1 1 1.8 1 Z" fill="none" stroke="#444" stroke-width="1.3"/><path d="M2.2 8 H10.8 V12 H2.2 Z" fill="#4fb8ea" opacity="0.9"/><path d="M3.4 9.2 H9.6 V12 H3.4Z" fill="#fff"/></svg>
<div class="a" style="left:1762.00px;top:814.00px;width:108.00px;height:23.00px;background:#fff;border:1px solid #cbcbcb;border-radius:4px;box-sizing:border-box;"></div>
<div class="t" style="top:816.40px;font-size:13px;color:#1e1e1e;left:1796.00px;">Провести</div>
<svg class="a" style="left:1779.50px;top:819.00px" width="14" height="14" viewBox="0 0 14 14"><path d="M1.5 7.5 L5 11 L12.5 2.5" fill="none" stroke="#3a3a3a" stroke-width="1.6"/></svg>
<div class="a" style="left:1874.00px;top:814.00px;width:101.00px;height:23.00px;background:#fff;border:1px solid #cbcbcb;border-radius:4px;box-sizing:border-box;"></div>
<div class="t" style="top:816.40px;font-size:13px;color:#1e1e1e;left:1908.00px;">Закрыть</div>
<svg class="a" style="left:1893.30px;top:819.50px" width="12" height="12" viewBox="0 0 12 12"><path d="M1 1 L11 11 M11 1 L1 11" fill="none" stroke="#333" stroke-width="1.5"/></svg>
<div class="a" style="left:0.00px;top:169.00px;width:767.00px;height:654.00px;background:#dcdcdc;"></div>
<div class="a" style="left:6.00px;top:196.00px;width:758.00px;height:625.00px;background:#f2f2f2;"></div>
<div class="a" style="left:6.00px;top:196.00px;width:761.00px;height:1.00px;background:#c9c9c9;"></div>
<div class="a" style="left:764.00px;top:214.00px;width:3.00px;height:608.00px;background:#c3c3c3;"></div>
<div class="a" style="left:764.00px;top:196.00px;width:3.00px;height:18.00px;background:#f2f2f2;"></div>
<div class="a" style="left:0.00px;top:821.00px;width:767.00px;height:2.00px;background:#d8d8d8;"></div>
<div class="t" style="top:174.40px;font-size:13px;color:#111;font-weight:bold;left:6.60px;">Выбрать накладные</div>
<div class="t" style="top:205.90px;font-size:13px;color:#1e1e1e;left:8.00px;">Операция</div>
<div class="a" style="left:74.00px;top:203.00px;width:226.00px;height:23.00px;background:#fff;border:1px solid #c9c9c9;border-radius:3px;box-sizing:border-box;"></div>
<div class="a" style="left:294.00px;top:220.00px;width:0;height:0;border-left:5px solid transparent;border-bottom:5px solid #0f89c4;"></div>
<svg class="a" style="left:9.00px;top:232.20px" width="13" height="13" viewBox="0 0 13 13"><circle cx="6.5" cy="6.5" r="5.1" fill="none" stroke="#c6c6c6" stroke-width="1.3"/><path d="M4.2 6.5 H8.8" stroke="#c2c2c2" stroke-width="1.3"/></svg>
<div class="a" style="left:25.00px;top:239.00px;width:4.00px;height:1.00px;background:#d0d0d0;"></div>
<div class="t" style="top:230.20px;font-size:13px;color:#a3a3a3;left:32.40px;">Накладная (польз.) (закупка)</div>
<div class="a" style="left:210.00px;top:239.00px;width:550.00px;height:1.00px;background:#d8d8d8;"></div>
<div class="a" style="left:8.00px;top:252.00px;width:753.00px;height:294.00px;background:#fff;border:1px solid #cfcfcf;border-radius:3px;box-sizing:border-box;"></div>
<div class="a" style="left:9.00px;top:324.00px;width:744.00px;height:1.00px;background:#e3e3e3;"></div>
<svg class="a" style="left:19.05px;top:306.35px" width="13.5" height="13.5" viewBox="0 0 14 14"><rect x="0.65" y="0.65" width="12.7" height="12.7" rx="2.6" fill="#fff" stroke="#6a6a6a" stroke-width="1.3"/></svg>
<svg class="a" style="left:52.15px;top:306.35px" width="13.5" height="13.5" viewBox="0 0 14 14"><rect x="0" y="0" width="14" height="14" rx="2.6" fill="#1670f5"/><path d="M3.2 7.2 L5.9 9.9 L10.9 4.2" stroke="#fff" stroke-width="2" fill="none" stroke-linecap="round" stroke-linejoin="round"/></svg>
<svg class="a" style="left:85.25px;top:306.35px" width="13.5" height="13.5" viewBox="0 0 14 14"><rect x="0.65" y="0.65" width="12.7" height="12.7" rx="2.6" fill="#fff" stroke="#6a6a6a" stroke-width="1.3"/></svg>
<div class="t" style="top:303.80px;font-size:13px;color:#1e1e1e;left:111.10px;width:73.40px;overflow:hidden;">0372119</div>
<div class="t" style="top:303.80px;font-size:13px;color:#1e1e1e;left:187.50px;width:29.00px;overflow:hidden;">БК</div>
<div class="t" style="top:303.80px;font-size:13px;color:#1e1e1e;left:-128.80px;width:400px;text-align:right;">22.12.22</div>
<div class="t" style="top:303.80px;font-size:13px;color:#1e1e1e;left:-87.20px;width:400px;text-align:right;">12:12</div>
<div class="t" style="top:303.80px;font-size:13px;color:#1e1e1e;letter-spacing:-0.27px;left:320.70px;width:167.90px;overflow:hidden;">БАКАЛДРИН СООО</div>
<div class="t" style="top:303.80px;font-size:13px;color:#1e1e1e;left:492.00px;width:167.70px;overflow:hidden;">ООО "ЛюксСофтТрейд"</div>
<div class="t" style="top:303.80px;font-size:13px;color:#1e1e1e;left:663.10px;width:89.60px;overflow:hidden;">Белорусский р</div>
<div class="a" style="left:9.00px;top:346.00px;width:744.00px;height:1.00px;background:#e3e3e3;"></div>
<svg class="a" style="left:19.05px;top:328.32px" width="13.5" height="13.5" viewBox="0 0 14 14"><rect x="0.65" y="0.65" width="12.7" height="12.7" rx="2.6" fill="#fff" stroke="#6a6a6a" stroke-width="1.3"/></svg>
<svg class="a" style="left:52.15px;top:328.32px" width="13.5" height="13.5" viewBox="0 0 14 14"><rect x="0.65" y="0.65" width="12.7" height="12.7" rx="2.6" fill="#fff" stroke="#6a6a6a" stroke-width="1.3"/></svg>
<svg class="a" style="left:85.25px;top:328.32px" width="13.5" height="13.5" viewBox="0 0 14 14"><rect x="0.65" y="0.65" width="12.7" height="12.7" rx="2.6" fill="#fff" stroke="#6a6a6a" stroke-width="1.3"/></svg>
<div class="t" style="top:325.77px;font-size:13px;color:#1e1e1e;left:111.10px;width:73.40px;overflow:hidden;">0372114</div>
<div class="t" style="top:325.77px;font-size:13px;color:#1e1e1e;left:187.50px;width:29.00px;overflow:hidden;">БК</div>
<div class="t" style="top:325.77px;font-size:13px;color:#1e1e1e;left:-128.80px;width:400px;text-align:right;">22.12.22</div>
<div class="t" style="top:325.77px;font-size:13px;color:#1e1e1e;left:-87.20px;width:400px;text-align:right;">14:29</div>
<div class="t" style="top:325.77px;font-size:13px;color:#1e1e1e;letter-spacing:-0.27px;left:320.70px;width:167.90px;overflow:hidden;">КАМАКО ПРОДЦЕНТР УНИТАРНОЕ</div>
<div class="t" style="top:325.77px;font-size:13px;color:#1e1e1e;left:492.00px;width:167.70px;overflow:hidden;">ООО "ЛюксСофтТрейд"</div>
<div class="t" style="top:325.77px;font-size:13px;color:#1e1e1e;left:663.10px;width:89.60px;overflow:hidden;">Белорусский р</div>
<div class="a" style="left:9.00px;top:368.00px;width:744.00px;height:1.00px;background:#e3e3e3;"></div>
<svg class="a" style="left:19.05px;top:350.29px" width="13.5" height="13.5" viewBox="0 0 14 14"><rect x="0.65" y="0.65" width="12.7" height="12.7" rx="2.6" fill="#fff" stroke="#6a6a6a" stroke-width="1.3"/></svg>
<svg class="a" style="left:52.15px;top:350.29px" width="13.5" height="13.5" viewBox="0 0 14 14"><rect x="0" y="0" width="14" height="14" rx="2.6" fill="#1670f5"/><path d="M3.2 7.2 L5.9 9.9 L10.9 4.2" stroke="#fff" stroke-width="2" fill="none" stroke-linecap="round" stroke-linejoin="round"/></svg>
<svg class="a" style="left:85.25px;top:350.29px" width="13.5" height="13.5" viewBox="0 0 14 14"><rect x="0.65" y="0.65" width="12.7" height="12.7" rx="2.6" fill="#fff" stroke="#6a6a6a" stroke-width="1.3"/></svg>
<div class="t" style="top:347.74px;font-size:13px;color:#1e1e1e;left:111.10px;width:73.40px;overflow:hidden;">0372114</div>
<div class="t" style="top:347.74px;font-size:13px;color:#1e1e1e;left:187.50px;width:29.00px;overflow:hidden;">ПС</div>
<div class="t" style="top:347.74px;font-size:13px;color:#1e1e1e;left:-128.80px;width:400px;text-align:right;">22.12.22</div>
<div class="t" style="top:347.74px;font-size:13px;color:#1e1e1e;left:-87.20px;width:400px;text-align:right;">14:59</div>
<div class="t" style="top:347.74px;font-size:13px;color:#1e1e1e;letter-spacing:-0.27px;left:320.70px;width:167.90px;overflow:hidden;">КАМАКО ПРОДЦЕНТР УНИТАРНОЕ</div>
<div class="t" style="top:347.74px;font-size:13px;color:#1e1e1e;left:492.00px;width:167.70px;overflow:hidden;">ООО "ЛюксСофтТрейд"</div>
<div class="t" style="top:347.74px;font-size:13px;color:#1e1e1e;left:663.10px;width:89.60px;overflow:hidden;">Белорусский р</div>
<div class="a" style="left:9.00px;top:390.00px;width:744.00px;height:1.00px;background:#e3e3e3;"></div>
<svg class="a" style="left:19.05px;top:372.26px" width="13.5" height="13.5" viewBox="0 0 14 14"><rect x="0.65" y="0.65" width="12.7" height="12.7" rx="2.6" fill="#fff" stroke="#6a6a6a" stroke-width="1.3"/></svg>
<svg class="a" style="left:52.15px;top:372.26px" width="13.5" height="13.5" viewBox="0 0 14 14"><rect x="0" y="0" width="14" height="14" rx="2.6" fill="#1670f5"/><path d="M3.2 7.2 L5.9 9.9 L10.9 4.2" stroke="#fff" stroke-width="2" fill="none" stroke-linecap="round" stroke-linejoin="round"/></svg>
<svg class="a" style="left:85.25px;top:372.26px" width="13.5" height="13.5" viewBox="0 0 14 14"><rect x="0.65" y="0.65" width="12.7" height="12.7" rx="2.6" fill="#fff" stroke="#6a6a6a" stroke-width="1.3"/></svg>
<div class="t" style="top:369.71px;font-size:13px;color:#1e1e1e;left:111.10px;width:73.40px;overflow:hidden;">1008394</div>
<div class="t" style="top:369.71px;font-size:13px;color:#1e1e1e;left:187.50px;width:29.00px;overflow:hidden;">БК</div>
<div class="t" style="top:369.71px;font-size:13px;color:#1e1e1e;left:-128.80px;width:400px;text-align:right;">22.12.22</div>
<div class="t" style="top:369.71px;font-size:13px;color:#1e1e1e;left:-87.20px;width:400px;text-align:right;">16:48</div>
<div class="t" style="top:369.71px;font-size:13px;color:#1e1e1e;letter-spacing:-0.27px;left:320.70px;width:167.90px;overflow:hidden;">ЛИДАПИЩЕКОНЦЕНТРАТЫ ОАО</div>
<div class="t" style="top:369.71px;font-size:13px;color:#1e1e1e;left:492.00px;width:167.70px;overflow:hidden;">ООО "ЛюксСофтТрейд"</div>
<div class="t" style="top:369.71px;font-size:13px;color:#1e1e1e;left:663.10px;width:89.60px;overflow:hidden;">Белорусский р</div>
<div class="a" style="left:9.00px;top:412.00px;width:744.00px;height:1.00px;background:#e3e3e3;"></div>
<svg class="a" style="left:19.05px;top:394.23px" width="13.5" height="13.5" viewBox="0 0 14 14"><rect x="0.65" y="0.65" width="12.7" height="12.7" rx="2.6" fill="#fff" stroke="#6a6a6a" stroke-width="1.3"/></svg>
<svg class="a" style="left:52.15px;top:394.23px" width="13.5" height="13.5" viewBox="0 0 14 14"><rect x="0.65" y="0.65" width="12.7" height="12.7" rx="2.6" fill="#fff" stroke="#6a6a6a" stroke-width="1.3"/></svg>
<svg class="a" style="left:85.25px;top:394.23px" width="13.5" height="13.5" viewBox="0 0 14 14"><rect x="0.65" y="0.65" width="12.7" height="12.7" rx="2.6" fill="#fff" stroke="#6a6a6a" stroke-width="1.3"/></svg>
<div class="t" style="top:391.68px;font-size:13px;color:#1e1e1e;left:111.10px;width:73.40px;overflow:hidden;">00310</div>
<div class="t" style="top:391.68px;font-size:13px;color:#1e1e1e;left:187.50px;width:29.00px;overflow:hidden;">ПС</div>
<div class="t" style="top:391.68px;font-size:13px;color:#1e1e1e;left:-128.80px;width:400px;text-align:right;">22.12.22</div>
<div class="t" style="top:391.68px;font-size:13px;color:#1e1e1e;left:-87.20px;width:400px;text-align:right;">18:51</div>
<div class="t" style="top:391.68px;font-size:13px;color:#1e1e1e;letter-spacing:-0.27px;left:320.70px;width:167.90px;overflow:hidden;">САВУШКИН ПРОДУКТ ОАО</div>
<div class="t" style="top:391.68px;font-size:13px;color:#1e1e1e;left:492.00px;width:167.70px;overflow:hidden;">ЗАО "ЛюксСофтТорг"</div>
<div class="t" style="top:391.68px;font-size:13px;color:#1e1e1e;left:663.10px;width:89.60px;overflow:hidden;">Белорусский р</div>
<div class="a" style="left:9.00px;top:434.00px;width:744.00px;height:1.00px;background:#e3e3e3;"></div>
<svg class="a" style="left:19.05px;top:416.20px" width="13.5" height="13.5" viewBox="0 0 14 14"><rect x="0.65" y="0.65" width="12.7" height="12.7" rx="2.6" fill="#fff" stroke="#6a6a6a" stroke-width="1.3"/></svg>
<svg class="a" style="left:52.15px;top:416.20px" width="13.5" height="13.5" viewBox="0 0 14 14"><rect x="0" y="0" width="14" height="14" rx="2.6" fill="#1670f5"/><path d="M3.2 7.2 L5.9 9.9 L10.9 4.2" stroke="#fff" stroke-width="2" fill="none" stroke-linecap="round" stroke-linejoin="round"/></svg>
<svg class="a" style="left:85.25px;top:416.20px" width="13.5" height="13.5" viewBox="0 0 14 14"><rect x="0.65" y="0.65" width="12.7" height="12.7" rx="2.6" fill="#fff" stroke="#6a6a6a" stroke-width="1.3"/></svg>
<div class="t" style="top:413.65px;font-size:13px;color:#1e1e1e;left:111.10px;width:73.40px;overflow:hidden;">00311</div>
<div class="t" style="top:413.65px;font-size:13px;color:#1e1e1e;left:187.50px;width:29.00px;overflow:hidden;">ПС</div>
<div class="t" style="top:413.65px;font-size:13px;color:#1e1e1e;left:-128.80px;width:400px;text-align:right;">22.12.22</div>
<div class="t" style="top:413.65px;font-size:13px;color:#1e1e1e;left:-87.20px;width:400px;text-align:right;">19:22</div>
<div class="t" style="top:413.65px;font-size:13px;color:#1e1e1e;letter-spacing:-0.27px;left:320.70px;width:167.90px;overflow:hidden;">САВУШКИН ПРОДУКТ ОАО</div>
<div class="t" style="top:413.65px;font-size:13px;color:#1e1e1e;left:492.00px;width:167.70px;overflow:hidden;">ЗАО "ЛюксСофтТорг"</div>
<div class="t" style="top:413.65px;font-size:13px;color:#1e1e1e;left:663.10px;width:89.60px;overflow:hidden;">Белорусский р</div>
<div class="a" style="left:9.00px;top:456.00px;width:744.00px;height:1.00px;background:#e3e3e3;"></div>
<svg class="a" style="left:19.05px;top:438.17px" width="13.5" height="13.5" viewBox="0 0 14 14"><rect x="0.65" y="0.65" width="12.7" height="12.7" rx="2.6" fill="#fff" stroke="#6a6a6a" stroke-width="1.3"/></svg>
<svg class="a" style="left:52.15px;top:438.17px" width="13.5" height="13.5" viewBox="0 0 14 14"><rect x="0.65" y="0.65" width="12.7" height="12.7" rx="2.6" fill="#fff" stroke="#6a6a6a" stroke-width="1.3"/></svg>
<svg class="a" style="left:85.25px;top:438.17px" width="13.5" height="13.5" viewBox="0 0 14 14"><rect x="0.65" y="0.65" width="12.7" height="12.7" rx="2.6" fill="#fff" stroke="#6a6a6a" stroke-width="1.3"/></svg>
<div class="t" style="top:435.62px;font-size:13px;color:#1e1e1e;left:111.10px;width:73.40px;overflow:hidden;">00312</div>
<div class="t" style="top:435.62px;font-size:13px;color:#1e1e1e;left:187.50px;width:29.00px;overflow:hidden;">ПС</div>
<div class="t" style="top:435.62px;font-size:13px;color:#1e1e1e;left:-128.80px;width:400px;text-align:right;">22.12.22</div>
<div class="t" style="top:435.62px;font-size:13px;color:#1e1e1e;left:-87.20px;width:400px;text-align:right;">14:04</div>
<div class="t" style="top:435.62px;font-size:13px;color:#1e1e1e;letter-spacing:-0.27px;left:320.70px;width:167.90px;overflow:hidden;">САВУШКИН ПРОДУКТ ОАО</div>
<div class="t" style="top:435.62px;font-size:13px;color:#1e1e1e;left:492.00px;width:167.70px;overflow:hidden;">ЗАО "ЛюксСофтТорг"</div>
<div class="t" style="top:435.62px;font-size:13px;color:#1e1e1e;left:663.10px;width:89.60px;overflow:hidden;">Белорусский р</div>
<div class="a" style="left:9.00px;top:456.00px;width:744.00px;height:22.00px;background:#d4e4ea;"></div>
<div class="a" style="left:9.00px;top:478.00px;width:744.00px;height:1.00px;background:#e3e3e3;"></div>
<svg class="a" style="left:19.05px;top:460.14px" width="13.5" height="13.5" viewBox="0 0 14 14"><rect x="0" y="0" width="14" height="14" rx="2.6" fill="#1670f5"/><path d="M3.2 7.2 L5.9 9.9 L10.9 4.2" stroke="#fff" stroke-width="2" fill="none" stroke-linecap="round" stroke-linejoin="round"/></svg>
<svg class="a" style="left:52.15px;top:460.14px" width="13.5" height="13.5" viewBox="0 0 14 14"><rect x="0" y="0" width="14" height="14" rx="2.6" fill="#1670f5"/><path d="M3.2 7.2 L5.9 9.9 L10.9 4.2" stroke="#fff" stroke-width="2" fill="none" stroke-linecap="round" stroke-linejoin="round"/></svg>
<svg class="a" style="left:85.25px;top:460.14px" width="13.5" height="13.5" viewBox="0 0 14 14"><rect x="0.65" y="0.65" width="12.7" height="12.7" rx="2.6" fill="#fff" stroke="#6a6a6a" stroke-width="1.3"/></svg>
<div class="t" style="top:457.59px;font-size:13px;color:#1e1e1e;left:111.10px;width:73.40px;overflow:hidden;">0000313</div>
<div class="t" style="top:457.59px;font-size:13px;color:#1e1e1e;left:187.50px;width:29.00px;overflow:hidden;">ПС</div>
<div class="t" style="top:457.59px;font-size:13px;color:#1e1e1e;left:-128.80px;width:400px;text-align:right;">22.12.22</div>
<div class="t" style="top:457.59px;font-size:13px;color:#1e1e1e;left:-87.20px;width:400px;text-align:right;">14:16</div>
<div class="t" style="top:457.59px;font-size:13px;color:#1e1e1e;letter-spacing:-0.27px;left:320.70px;width:167.90px;overflow:hidden;">АВАЛОНТОРГ ООО</div>
<div class="t" style="top:457.59px;font-size:13px;color:#1e1e1e;left:492.00px;width:167.70px;overflow:hidden;">ЗАО "ЛюксСофтТорг"</div>
<div class="t" style="top:457.59px;font-size:13px;color:#1e1e1e;left:663.10px;width:89.60px;overflow:hidden;">Белорусский р</div>
<div class="a" style="left:9.00px;top:500.00px;width:744.00px;height:1.00px;background:#e3e3e3;"></div>
<svg class="a" style="left:19.05px;top:482.11px" width="13.5" height="13.5" viewBox="0 0 14 14"><rect x="0.65" y="0.65" width="12.7" height="12.7" rx="2.6" fill="#fff" stroke="#6a6a6a" stroke-width="1.3"/></svg>
<svg class="a" style="left:52.15px;top:482.11px" width="13.5" height="13.5" viewBox="0 0 14 14"><rect x="0.65" y="0.65" width="12.7" height="12.7" rx="2.6" fill="#fff" stroke="#6a6a6a" stroke-width="1.3"/></svg>
<svg class="a" style="left:85.25px;top:482.11px" width="13.5" height="13.5" viewBox="0 0 14 14"><rect x="0.65" y="0.65" width="12.7" height="12.7" rx="2.6" fill="#fff" stroke="#6a6a6a" stroke-width="1.3"/></svg>
<div class="t" style="top:479.56px;font-size:13px;color:#1e1e1e;left:111.10px;width:73.40px;overflow:hidden;">00314</div>
<div class="t" style="top:479.56px;font-size:13px;color:#1e1e1e;left:187.50px;width:29.00px;overflow:hidden;">ПС</div>
<div class="t" style="top:479.56px;font-size:13px;color:#1e1e1e;left:-128.80px;width:400px;text-align:right;">22.12.22</div>
<div class="t" style="top:479.56px;font-size:13px;color:#1e1e1e;left:-87.20px;width:400px;text-align:right;">15:27</div>
<div class="t" style="top:479.56px;font-size:13px;color:#1e1e1e;letter-spacing:-0.27px;left:320.70px;width:167.90px;overflow:hidden;">БРЕСТСКИЙ МЯСОКОМБИНАТ</div>
<div class="t" style="top:479.56px;font-size:13px;color:#1e1e1e;left:492.00px;width:167.70px;overflow:hidden;">ЗАО "ЛюксСофтТорг"</div>
<div class="t" style="top:479.56px;font-size:13px;color:#1e1e1e;left:663.10px;width:89.60px;overflow:hidden;">Белорусский р</div>
<div class="a" style="left:9.00px;top:522.00px;width:744.00px;height:1.00px;background:#e3e3e3;"></div>
<svg class="a" style="left:19.05px;top:504.08px" width="13.5" height="13.5" viewBox="0 0 14 14"><rect x="0" y="0" width="14" height="14" rx="2.6" fill="#1670f5"/><path d="M3.2 7.2 L5.9 9.9 L10.9 4.2" stroke="#fff" stroke-width="2" fill="none" stroke-linecap="round" stroke-linejoin="round"/></svg>
<svg class="a" style="left:52.15px;top:504.08px" width="13.5" height="13.5" viewBox="0 0 14 14"><rect x="0" y="0" width="14" height="14" rx="2.6" fill="#1670f5"/><path d="M3.2 7.2 L5.9 9.9 L10.9 4.2" stroke="#fff" stroke-width="2" fill="none" stroke-linecap="round" stroke-linejoin="round"/></svg>
<svg class="a" style="left:85.25px;top:504.08px" width="13.5" height="13.5" viewBox="0 0 14 14"><rect x="0.65" y="0.65" width="12.7" height="12.7" rx="2.6" fill="#fff" stroke="#6a6a6a" stroke-width="1.3"/></svg>
<div class="t" style="top:501.53px;font-size:13px;color:#1e1e1e;left:111.10px;width:73.40px;overflow:hidden;">0000315</div>
<div class="t" style="top:501.53px;font-size:13px;color:#1e1e1e;left:187.50px;width:29.00px;overflow:hidden;">ПС</div>
<div class="t" style="top:501.53px;font-size:13px;color:#1e1e1e;left:-128.80px;width:400px;text-align:right;">22.12.22</div>
<div class="t" style="top:501.53px;font-size:13px;color:#1e1e1e;left:-87.20px;width:400px;text-align:right;">08:09</div>
<div class="t" style="top:501.53px;font-size:13px;color:#1e1e1e;letter-spacing:-0.27px;left:320.70px;width:167.90px;overflow:hidden;">АВАЛОНТОРГ ООО</div>
<div class="t" style="top:501.53px;font-size:13px;color:#1e1e1e;left:492.00px;width:167.70px;overflow:hidden;">ЗАО "ЛюксСофтТорг"</div>
<div class="t" style="top:501.53px;font-size:13px;color:#1e1e1e;left:663.10px;width:89.60px;overflow:hidden;">Белорусский р</div>
<div class="a" style="left:9.00px;top:543.00px;width:744.00px;height:1.00px;background:#e3e3e3;"></div>
<svg class="a" style="left:19.05px;top:526.05px" width="13.5" height="13.5" viewBox="0 0 14 14"><rect x="0.65" y="0.65" width="12.7" height="12.7" rx="2.6" fill="#fff" stroke="#6a6a6a" stroke-width="1.3"/></svg>
<svg class="a" style="left:52.15px;top:526.05px" width="13.5" height="13.5" viewBox="0 0 14 14"><rect x="0.65" y="0.65" width="12.7" height="12.7" rx="2.6" fill="#fff" stroke="#6a6a6a" stroke-width="1.3"/></svg>
<svg class="a" style="left:85.25px;top:526.05px" width="13.5" height="13.5" viewBox="0 0 14 14"><rect x="0.65" y="0.65" width="12.7" height="12.7" rx="2.6" fill="#fff" stroke="#6a6a6a" stroke-width="1.3"/></svg>
<div class="t" style="top:523.50px;font-size:13px;color:#1e1e1e;left:111.10px;width:73.40px;overflow:hidden;"></div>
<div class="t" style="top:523.50px;font-size:13px;color:#1e1e1e;left:187.50px;width:29.00px;overflow:hidden;"></div>
<div class="t" style="top:523.50px;font-size:13px;color:#1e1e1e;left:-128.80px;width:400px;text-align:right;">22.12.22</div>
<div class="t" style="top:523.50px;font-size:13px;color:#1e1e1e;left:-87.20px;width:400px;text-align:right;">11:43</div>
<div class="t" style="top:523.50px;font-size:13px;color:#1e1e1e;letter-spacing:-0.27px;left:320.70px;width:167.90px;overflow:hidden;">АВАЛОНТОРГ ООО</div>
<div class="t" style="top:523.50px;font-size:13px;color:#1e1e1e;left:492.00px;width:167.70px;overflow:hidden;">ЗАО "ЛюксСофтТорг"</div>
<div class="t" style="top:523.50px;font-size:13px;color:#1e1e1e;left:663.10px;width:89.60px;overflow:hidden;">Белорусский р</div>
<svg class="a" style="left:19.05px;top:284.38px" width="13.5" height="13.5" viewBox="0 0 14 14"><rect x="0.65" y="0.65" width="12.7" height="12.7" rx="2.6" fill="#fff" stroke="#6a6a6a" stroke-width="1.3"/></svg>
<svg class="a" style="left:52.15px;top:284.38px" width="13.5" height="13.5" viewBox="0 0 14 14"><rect x="0.65" y="0.65" width="12.7" height="12.7" rx="2.6" fill="#fff" stroke="#6a6a6a" stroke-width="1.3"/></svg>
<svg class="a" style="left:85.25px;top:284.38px" width="13.5" height="13.5" viewBox="0 0 14 14"><rect x="0.65" y="0.65" width="12.7" height="12.7" rx="2.6" fill="#fff" stroke="#6a6a6a" stroke-width="1.3"/></svg>
<div class="t" style="top:281.83px;font-size:13px;color:#1e1e1e;left:111.10px;width:73.40px;overflow:hidden;">0372114</div>
<div class="t" style="top:281.83px;font-size:13px;color:#1e1e1e;left:-128.80px;width:400px;text-align:right;">22.12.22</div>
<div class="t" style="top:281.83px;font-size:13px;color:#1e1e1e;left:-87.20px;width:400px;text-align:right;">10:30</div>
<div class="t" style="top:281.83px;font-size:13px;color:#1e1e1e;letter-spacing:-0.27px;left:320.70px;width:167.90px;overflow:hidden;">АГРОКОМБИНАТ ЖДАНОВИЧИ</div>
<div class="t" style="top:281.83px;font-size:13px;color:#1e1e1e;left:492.00px;width:167.70px;overflow:hidden;">ОДО</div>
<div class="t" style="top:281.83px;font-size:13px;color:#1e1e1e;left:663.10px;width:89.60px;overflow:hidden;">Белорусский р</div>
<div class="a" style="left:9.00px;top:302.00px;width:744.00px;height:1.00px;background:#e3e3e3;"></div>
<div class="a" style="left:41.00px;top:254.00px;width:1.00px;height:291.00px;background:#e0e0e0;"></div>
<div class="a" style="left:74.00px;top:254.00px;width:1.00px;height:291.00px;background:#e0e0e0;"></div>
<div class="a" style="left:107.00px;top:254.00px;width:1.00px;height:291.00px;background:#e0e0e0;"></div>
<div class="a" style="left:184.00px;top:254.00px;width:1.00px;height:291.00px;background:#e0e0e0;"></div>
<div class="a" style="left:216.00px;top:254.00px;width:1.00px;height:291.00px;background:#e0e0e0;"></div>
<div class="a" style="left:275.00px;top:254.00px;width:1.00px;height:291.00px;background:#e0e0e0;"></div>
<div class="a" style="left:317.00px;top:254.00px;width:1.00px;height:291.00px;background:#e0e0e0;"></div>
<div class="a" style="left:488.00px;top:254.00px;width:1.00px;height:291.00px;background:#e0e0e0;"></div>
<div class="a" style="left:659.00px;top:254.00px;width:1.00px;height:291.00px;background:#e0e0e0;"></div>
<div class="a" style="left:9.00px;top:254.00px;width:744.00px;height:42.00px;background:#f2f2f2;"></div>
<div class="a" style="left:753.00px;top:254.00px;width:7.00px;height:42.00px;background:#f7f7f7;"></div>
<div class="a" style="left:41.00px;top:254.00px;width:1.00px;height:42.00px;background:#dedede;"></div>
<div class="a" style="left:74.00px;top:254.00px;width:1.00px;height:42.00px;background:#dedede;"></div>
<div class="a" style="left:107.00px;top:254.00px;width:1.00px;height:42.00px;background:#dedede;"></div>
<div class="a" style="left:184.00px;top:254.00px;width:1.00px;height:42.00px;background:#dedede;"></div>
<div class="a" style="left:216.00px;top:254.00px;width:1.00px;height:42.00px;background:#dedede;"></div>
<div class="a" style="left:275.00px;top:254.00px;width:1.00px;height:42.00px;background:#dedede;"></div>
<div class="a" style="left:317.00px;top:254.00px;width:1.00px;height:42.00px;background:#dedede;"></div>
<div class="a" style="left:488.00px;top:254.00px;width:1.00px;height:42.00px;background:#dedede;"></div>
<div class="a" style="left:659.00px;top:254.00px;width:1.00px;height:42.00px;background:#dedede;"></div>
<div class="t" style="top:264.70px;font-size:13px;color:#1e1e1e;left:-175.00px;width:400px;text-align:center;">Вкл.</div>
<div class="t" style="top:264.70px;font-size:13px;color:#1e1e1e;left:44.00px;width:29.50px;overflow:hidden;">Проведен</div>
<div class="t" style="top:264.70px;font-size:13px;color:#1e1e1e;left:77.60px;width:28.90px;overflow:hidden;">Закрыт</div>
<div class="t" style="top:264.70px;font-size:13px;color:#1e1e1e;left:-54.00px;width:400px;text-align:center;">Номер</div>
<div class="t" style="top:264.70px;font-size:13px;color:#1e1e1e;left:186.60px;width:28.90px;overflow:hidden;">Серия</div>
<div class="t" style="top:256.50px;font-size:13px;color:#1e1e1e;left:219.50px;width:55.70px;overflow:hidden;width:56px;text-align:center;left:218px;">Дата</div>
<div class="t" style="top:273.50px;font-size:13px;color:#1e1e1e;left:218.60px;width:55.60px;overflow:hidden;">документа</div>
<div class="t" style="top:256.50px;font-size:13px;color:#1e1e1e;left:278.40px;width:37.90px;overflow:hidden;">Время</div>
<div class="t" style="top:273.50px;font-size:13px;color:#1e1e1e;left:278.40px;width:37.90px;overflow:hidden;">документа</div>
<div class="t" style="top:264.70px;font-size:13px;color:#1e1e1e;left:202.95px;width:400px;text-align:center;">Поставщик</div>
<div class="t" style="top:264.70px;font-size:13px;color:#1e1e1e;left:374.15px;width:400px;text-align:center;">Покупатель</div>
<div class="t" style="top:264.70px;font-size:13px;color:#1e1e1e;left:506.20px;width:400px;text-align:center;">Валюта</div>
<div class="a" style="left:34.80px;top:289.70px;width:0;height:0;border-left:6px solid transparent;border-bottom:6px solid #0f89c4;"></div>
<div class="a" style="left:753.00px;top:296.00px;width:7.00px;height:249.00px;background:#fafafa;"></div>
<div class="a" style="left:753.00px;top:510.00px;width:6.00px;height:34.00px;background:#d0d0d0;"></div>
<div class="a" style="left:8px;top:551.30px;width:23.5px;height:23.3px;box-sizing:border-box;background:#d3e4ea;border:1px solid #c5d3d8;border-radius:5px;"></div>
<svg class="a" style="left:10.00px;top:550.90px" width="22" height="24" viewBox="0 -12 22 24"><g fill="none" stroke="#4cbcec" stroke-width="1.5"><circle cx="3.2" cy="-5.6" r="1.9"/><circle cx="3.2" cy="0.1" r="1.9"/><circle cx="3.2" cy="5.7" r="1.9"/></g><path d="M8.2 -5.1 H18.7 M8.2 0.6 H18.7 M8.2 6.3 H18.7" stroke="#3c3c3c" stroke-width="1.6"/></svg>
<svg class="a" style="left:40.00px;top:550.90px" width="19" height="24" viewBox="0 -12 19 24"><path d="M6.2 -8.6 V8.6 M11.6 -8.6 V8.6 M0.6 -2.9 H17.4 M0.6 2.6 H17.4" stroke="#4cbcec" stroke-width="1.3"/><rect x="0.9" y="-8.6" width="16.6" height="17.4" rx="1.2" fill="none" stroke="#222" stroke-width="1.5"/></svg>
<svg class="a" style="left:69.00px;top:550.90px" width="18" height="24" viewBox="0 -12 18 24"><rect x="0.8" y="-6.6" width="16" height="15.3" rx="2" fill="none" stroke="#2a2a2a" stroke-width="1.5"/><path d="M0.8 -2.9 H16.8" stroke="#444" stroke-width="1.3"/><path d="M4.6 -9 V-6.2 M12.3 -9 V-6.2" stroke="#2a2a2a" stroke-width="1.4"/><path d="M3 2.8 H14.2 M5.6 -0.9 V6.2 M11.4 -0.9 V6.2" stroke="#4cbcec" stroke-width="1.4"/></svg>
<div class="a" style="left:94.00px;top:551.00px;width:1.00px;height:24.00px;background:#cfcfcf;"></div>
<svg class="a" style="left:103.00px;top:550.90px" width="18" height="24" viewBox="0 -12 18 24"><path d="M0.3 -6.2 H16.5 M4.5 2.8 H12.3" stroke="#3c3c3c" stroke-width="1.6"/><path d="M2.5 -1.6 H14.4 M6.6 7.3 H10.6" stroke="#4cbcec" stroke-width="1.6"/></svg>
<div class="a" style="left:128.00px;top:551.00px;width:1.00px;height:24.00px;background:#cfcfcf;"></div>
<svg class="a" style="left:136.30px;top:550.90px" width="18" height="24" viewBox="0 -12 18 24"><g transform="translate(9 0)"><path d="M-2.36 -7.64 L2.36 -7.64 L2.41 -5.39 L3.46 -4.78 L5.44 -5.87 L7.80 -1.77 L5.87 -0.61 L5.87 0.61 L7.80 1.77 L5.44 5.87 L3.46 4.78 L2.41 5.39 L2.36 7.64 L-2.36 7.64 L-2.41 5.39 L-3.46 4.78 L-5.44 5.87 L-7.80 1.77 L-5.87 0.61 L-5.87 -0.61 L-7.80 -1.77 L-5.44 -5.87 L-3.46 -4.78 L-2.41 -5.39 Z" fill="none" stroke="#3c3c3c" stroke-width="1.5" stroke-linejoin="round"/><circle r="3" fill="none" stroke="#4cbcec" stroke-width="1.7"/></g></svg>
<div class="a" style="left:162.00px;top:551.00px;width:1.00px;height:24.00px;background:#cfcfcf;"></div>
<svg class="a" style="left:171.00px;top:550.90px" width="18" height="24" viewBox="0 -12 18 24"><path d="M2.6 -8.2 V-4.2 M1.8 -7.4 L2.6 -8.2" stroke="#4cbcec" stroke-width="1.2" fill="none"/><path d="M1.4 -1.2 Q3.6 -2.6 3.6 -0.6 L1.4 2.6 H3.8" stroke="#4cbcec" stroke-width="1.1" fill="none"/><path d="M1.4 5.4 H3.6 L2.4 7 Q4 7.2 3.6 8.6 Q3 9.6 1.4 9" stroke="#4cbcec" stroke-width="1.1" fill="none"/><path d="M6.7 -6.2 H16.5 M6.7 0.6 H16.5 M6.7 7.4 H16.5" stroke="#3c3c3c" stroke-width="1.6"/></svg>
<svg class="a" style="left:199.00px;top:550.90px" width="19" height="24" viewBox="0 -12 19 24"><path d="M0.3 -7.3 H17.3 M0.3 -2.8 H17.3 M0.3 1.5 H7.2 M0.3 6.2 H7.2" stroke="#3c3c3c" stroke-width="1.6"/><path d="M10.4 4.1 H17.6 M14 0.6 V7.6" stroke="#4cbcec" stroke-width="1.6"/></svg>
<div class="a" style="left:225.00px;top:551.00px;width:1.00px;height:24.00px;background:#cfcfcf;"></div>
<svg class="a" style="left:232.00px;top:550.90px" width="20" height="24" viewBox="0 -12 20 24"><path d="M8.5 -5.1 H4 Q1.2 -5.1 1.2 -2.3 V5.8 Q1.2 8.6 4 8.6 H12.4 Q15.2 8.6 15.2 5.8 V1.4" fill="none" stroke="#5a5a5a" stroke-width="1.8"/><path d="M9.5 0.6 L18.3 -8.2 M11.4 -8.4 H18.5 V-0.6" fill="none" stroke="#4cbcec" stroke-width="1.7"/></svg>
<div class="a" style="left:259.00px;top:551.00px;width:1.00px;height:24.00px;background:#cfcfcf;"></div>
<svg class="a" style="left:266.00px;top:550.90px" width="21" height="24" viewBox="0 -12 21 24"><path d="M3 4.7 H2 V-5.3 H12.6" fill="none" stroke="#2a2a2a" stroke-width="1.6"/><path d="M9.6 -8.4 L12.8 -5.3 L9.6 -2.1" fill="none" stroke="#2a2a2a" stroke-width="1.6"/><path d="M16.4 -5.4 H18 V5.4 H7.2" fill="none" stroke="#4cbcec" stroke-width="1.6"/><path d="M10.2 2.2 L7 5.4 L10.2 8.7" fill="none" stroke="#4cbcec" stroke-width="1.6"/></svg>
<svg class="a" style="left:633.85px;top:557.45px" width="13.5" height="13.5" viewBox="0 0 14 14"><rect x="0.65" y="0.65" width="12.7" height="12.7" rx="2.6" fill="#fff" stroke="#6a6a6a" stroke-width="1.3"/></svg>
<div class="t" style="top:555.00px;font-size:13px;color:#1e1e1e;left:652.40px;letter-spacing:-0.2px;">Отмеченные (F10)</div>
<svg class="a" style="left:9.00px;top:581.90px" width="13" height="13" viewBox="0 0 13 13"><circle cx="6.5" cy="6.5" r="5.1" fill="none" stroke="#c6c6c6" stroke-width="1.3"/><path d="M4.2 6.5 H8.8" stroke="#c2c2c2" stroke-width="1.3"/></svg>
<div class="a" style="left:25.00px;top:589.00px;width:4.00px;height:1.00px;background:#d0d0d0;"></div>
<div class="t" style="top:579.90px;font-size:13px;color:#a3a3a3;left:32.40px;">Строка накладной (польз.) (закупка)</div>
<div class="a" style="left:255.00px;top:588.00px;width:505.00px;height:1.00px;background:#d8d8d8;"></div>
<div class="a" style="left:8.00px;top:601.00px;width:753.00px;height:157.00px;background:#fff;border:1px solid #cfcfcf;border-radius:3px;box-sizing:border-box;"></div>
<div class="a" style="left:9.00px;top:602.00px;width:751.00px;height:43.00px;background:#f2f2f2;"></div>
<div class="a" style="left:9.00px;top:666.00px;width:751.00px;height:1.00px;background:#e3e3e3;"></div>
<svg class="a" style="left:18.75px;top:648.85px" width="13.5" height="13.5" viewBox="0 0 14 14"><rect x="0" y="0" width="14" height="14" rx="2.6" fill="#1670f5"/><path d="M3.2 7.2 L5.9 9.9 L10.9 4.2" stroke="#fff" stroke-width="2" fill="none" stroke-linecap="round" stroke-linejoin="round"/></svg>
<div class="t" style="top:646.30px;font-size:13px;color:#1e1e1e;left:-293.20px;width:400px;text-align:right;">1</div>
<div class="t" style="top:646.30px;font-size:13px;color:#1e1e1e;left:113.80px;width:114.60px;overflow:hidden;">4811548004957</div>
<div class="t" style="top:646.30px;font-size:13px;color:#1e1e1e;letter-spacing:-0.27px;left:232.00px;width:292.60px;overflow:hidden;">КОНС.МЯСН.ВЕТЧИНКА ДОМАШНЯЯ 110Г КВИНФУ</div>
<div class="t" style="top:646.30px;font-size:13px;color:#1e1e1e;left:528.00px;width:28.60px;overflow:hidden;">шт</div>
<div class="t" style="top:646.30px;font-size:13px;color:#1e1e1e;left:213.40px;width:400px;text-align:right;">20</div>
<div class="t" style="top:646.30px;font-size:13px;color:#1e1e1e;left:274.20px;width:400px;text-align:right;">1</div>
<div class="a" style="left:9.00px;top:666.00px;width:751.00px;height:22.00px;background:#d4e4ea;"></div>
<div class="a" style="left:9.00px;top:688.00px;width:751.00px;height:1.00px;background:#e3e3e3;"></div>
<svg class="a" style="left:18.75px;top:670.65px" width="13.5" height="13.5" viewBox="0 0 14 14"><rect x="0" y="0" width="14" height="14" rx="2.6" fill="#1670f5"/><path d="M3.2 7.2 L5.9 9.9 L10.9 4.2" stroke="#fff" stroke-width="2" fill="none" stroke-linecap="round" stroke-linejoin="round"/></svg>
<div class="t" style="top:668.10px;font-size:13px;color:#1e1e1e;left:-293.20px;width:400px;text-align:right;">2</div>
<div class="t" style="top:668.10px;font-size:13px;color:#1e1e1e;left:113.80px;width:114.60px;overflow:hidden;">4811548005411</div>
<div class="t" style="top:668.10px;font-size:13px;color:#1e1e1e;letter-spacing:-0.27px;left:232.00px;width:292.60px;overflow:hidden;">КОНС.МЯСН.ГОВЯДИНА ТУШ.СЕМЕЙНАЯ 340Г РБ</div>
<div class="t" style="top:668.10px;font-size:13px;color:#1e1e1e;left:528.00px;width:28.60px;overflow:hidden;">шт</div>
<div class="t" style="top:668.10px;font-size:13px;color:#1e1e1e;left:213.40px;width:400px;text-align:right;">20</div>
<div class="t" style="top:668.10px;font-size:13px;color:#1e1e1e;left:274.20px;width:400px;text-align:right;">2,46</div>
<div class="a" style="left:40.00px;top:602.00px;width:1.00px;height:86.00px;background:#e0e0e0;"></div>
<div class="a" style="left:110.00px;top:602.00px;width:1.00px;height:86.00px;background:#e0e0e0;"></div>
<div class="a" style="left:228.00px;top:602.00px;width:1.00px;height:86.00px;background:#e0e0e0;"></div>
<div class="a" style="left:524.00px;top:602.00px;width:1.00px;height:86.00px;background:#e0e0e0;"></div>
<div class="a" style="left:556.00px;top:602.00px;width:1.00px;height:86.00px;background:#e0e0e0;"></div>
<div class="a" style="left:617.00px;top:602.00px;width:1.00px;height:86.00px;background:#e0e0e0;"></div>
<div class="a" style="left:678.00px;top:602.00px;width:1.00px;height:86.00px;background:#e0e0e0;"></div>
<div class="a" style="left:9.00px;top:644.00px;width:751.00px;height:1.00px;background:#e3e3e3;"></div>
<div class="t" style="top:613.40px;font-size:13px;color:#1e1e1e;left:-175.40px;width:400px;text-align:center;">Вкл.</div>
<div class="t" style="top:605.00px;font-size:13px;color:#1e1e1e;left:-124.50px;width:400px;text-align:center;">Номер</div>
<div class="t" style="top:622.20px;font-size:13px;color:#1e1e1e;left:-124.50px;width:400px;text-align:center;">строки</div>
<div class="t" style="top:613.40px;font-size:13px;color:#1e1e1e;left:-30.70px;width:400px;text-align:center;">Штрихкод</div>
<div class="t" style="top:613.40px;font-size:13px;color:#1e1e1e;left:176.50px;width:400px;text-align:center;">Наименование</div>
<div class="t" style="top:605.00px;font-size:13px;color:#1e1e1e;left:340.60px;width:400px;text-align:center;">Ед.</div>
<div class="t" style="top:622.20px;font-size:13px;color:#1e1e1e;left:340.60px;width:400px;text-align:center;">изм.</div>
<div class="t" style="top:613.40px;font-size:13px;color:#1e1e1e;left:387.00px;width:400px;text-align:center;">Кол-во</div>
<div class="t" style="top:613.40px;font-size:13px;color:#1e1e1e;left:447.80px;width:400px;text-align:center;">Цена</div>
<div class="t" style="top:605.00px;font-size:13px;color:#1e1e1e;left:519.40px;width:400px;text-align:center;">Вес брутто,</div>
<div class="t" style="top:622.20px;font-size:13px;color:#1e1e1e;left:519.40px;width:400px;text-align:center;">кг</div>
<div class="a" style="left:34.30px;top:638.10px;width:0;height:0;border-left:6px solid transparent;border-bottom:6px solid #0f89c4;"></div>
<div class="a" style="left:8px;top:763.20px;width:23.5px;height:23.3px;box-sizing:border-box;background:#d3e4ea;border:1px solid #c5d3d8;border-radius:5px;"></div>
<svg class="a" style="left:10.00px;top:762.80px" width="22" height="24" viewBox="0 -12 22 24"><g fill="none" stroke="#4cbcec" stroke-width="1.5"><circle cx="3.2" cy="-5.6" r="1.9"/><circle cx="3.2" cy="0.1" r="1.9"/><circle cx="3.2" cy="5.7" r="1.9"/></g><path d="M8.2 -5.1 H18.7 M8.2 0.6 H18.7 M8.2 6.3 H18.7" stroke="#3c3c3c" stroke-width="1.6"/></svg>
<svg class="a" style="left:40.00px;top:762.80px" width="19" height="24" viewBox="0 -12 19 24"><path d="M6.2 -8.6 V8.6 M11.6 -8.6 V8.6 M0.6 -2.9 H17.4 M0.6 2.6 H17.4" stroke="#4cbcec" stroke-width="1.3"/><rect x="0.9" y="-8.6" width="16.6" height="17.4" rx="1.2" fill="none" stroke="#222" stroke-width="1.5"/></svg>
<div class="a" style="left:65.00px;top:763.00px;width:1.00px;height:24.00px;background:#cfcfcf;"></div>
<svg class="a" style="left:74.20px;top:762.80px" width="18" height="24" viewBox="0 -12 18 24"><path d="M0.3 -6.2 H16.5 M4.5 2.8 H12.3" stroke="#3c3c3c" stroke-width="1.6"/><path d="M2.5 -1.6 H14.4 M6.6 7.3 H10.6" stroke="#4cbcec" stroke-width="1.6"/></svg>
<div class="a" style="left:99.00px;top:763.00px;width:1.00px;height:24.00px;background:#cfcfcf;"></div>
<svg class="a" style="left:107.50px;top:762.80px" width="18" height="24" viewBox="0 -12 18 24"><g transform="translate(9 0)"><path d="M-2.36 -7.64 L2.36 -7.64 L2.41 -5.39 L3.46 -4.78 L5.44 -5.87 L7.80 -1.77 L5.87 -0.61 L5.87 0.61 L7.80 1.77 L5.44 5.87 L3.46 4.78 L2.41 5.39 L2.36 7.64 L-2.36 7.64 L-2.41 5.39 L-3.46 4.78 L-5.44 5.87 L-7.80 1.77 L-5.87 0.61 L-5.87 -0.61 L-7.80 -1.77 L-5.44 -5.87 L-3.46 -4.78 L-2.41 -5.39 Z" fill="none" stroke="#3c3c3c" stroke-width="1.5" stroke-linejoin="round"/><circle r="3" fill="none" stroke="#4cbcec" stroke-width="1.7"/></g></svg>
<div class="a" style="left:133.00px;top:763.00px;width:1.00px;height:24.00px;background:#cfcfcf;"></div>
<svg class="a" style="left:142.20px;top:762.80px" width="18" height="24" viewBox="0 -12 18 24"><path d="M2.6 -8.2 V-4.2 M1.8 -7.4 L2.6 -8.2" stroke="#4cbcec" stroke-width="1.2" fill="none"/><path d="M1.4 -1.2 Q3.6 -2.6 3.6 -0.6 L1.4 2.6 H3.8" stroke="#4cbcec" stroke-width="1.1" fill="none"/><path d="M1.4 5.4 H3.6 L2.4 7 Q4 7.2 3.6 8.6 Q3 9.6 1.4 9" stroke="#4cbcec" stroke-width="1.1" fill="none"/><path d="M6.7 -6.2 H16.5 M6.7 0.6 H16.5 M6.7 7.4 H16.5" stroke="#3c3c3c" stroke-width="1.6"/></svg>
<svg class="a" style="left:170.20px;top:762.80px" width="19" height="24" viewBox="0 -12 19 24"><path d="M0.3 -7.3 H17.3 M0.3 -2.8 H17.3 M0.3 1.5 H7.2 M0.3 6.2 H7.2" stroke="#3c3c3c" stroke-width="1.6"/><path d="M10.4 4.1 H17.6 M14 0.6 V7.6" stroke="#4cbcec" stroke-width="1.6"/></svg>
<div class="a" style="left:196.00px;top:763.00px;width:1.00px;height:24.00px;background:#cfcfcf;"></div>
<svg class="a" style="left:203.20px;top:762.80px" width="20" height="24" viewBox="0 -12 20 24"><path d="M8.5 -5.1 H4 Q1.2 -5.1 1.2 -2.3 V5.8 Q1.2 8.6 4 8.6 H12.4 Q15.2 8.6 15.2 5.8 V1.4" fill="none" stroke="#5a5a5a" stroke-width="1.8"/><path d="M9.5 0.6 L18.3 -8.2 M11.4 -8.4 H18.5 V-0.6" fill="none" stroke="#4cbcec" stroke-width="1.7"/></svg>
<div class="a" style="left:230.00px;top:763.00px;width:1.00px;height:24.00px;background:#cfcfcf;"></div>
<svg class="a" style="left:237.20px;top:762.80px" width="21" height="24" viewBox="0 -12 21 24"><path d="M3 4.7 H2 V-5.3 H12.6" fill="none" stroke="#2a2a2a" stroke-width="1.6"/><path d="M9.6 -8.4 L12.8 -5.3 L9.6 -2.1" fill="none" stroke="#2a2a2a" stroke-width="1.6"/><path d="M16.4 -5.4 H18 V5.4 H7.2" fill="none" stroke="#4cbcec" stroke-width="1.6"/><path d="M10.2 2.2 L7 5.4 L10.2 8.7" fill="none" stroke="#4cbcec" stroke-width="1.6"/></svg>
<svg class="a" style="left:504.75px;top:768.45px" width="13.5" height="13.5" viewBox="0 0 14 14"><rect x="0" y="0" width="14" height="14" rx="2.6" fill="#1670f5"/><path d="M3.2 7.2 L5.9 9.9 L10.9 4.2" stroke="#fff" stroke-width="2" fill="none" stroke-linecap="round" stroke-linejoin="round"/></svg>
<div class="t" style="top:765.70px;font-size:13px;color:#1e1e1e;left:522.30px;">По инвойсу (F11)</div>
<svg class="a" style="left:633.85px;top:768.45px" width="13.5" height="13.5" viewBox="0 0 14 14"><rect x="0.65" y="0.65" width="12.7" height="12.7" rx="2.6" fill="#fff" stroke="#6a6a6a" stroke-width="1.3"/></svg>
<div class="t" style="top:765.70px;font-size:13px;color:#1e1e1e;left:651.80px;letter-spacing:-0.2px;">Отмеченные (F10)</div>
<div class="a" style="left:6.00px;top:791.00px;width:758.00px;height:1.00px;background:#d2d2d2;"></div>
<div class="a" style="left:534.00px;top:797.00px;width:50.00px;height:23.00px;background:#fff;border:1px solid #cbcbcb;border-radius:4px;box-sizing:border-box;"></div>
<svg class="a" style="left:550.80px;top:800.40px" width="16" height="16" viewBox="0 0 16 16"><path d="M2.6 7.2 A5.4 5.4 0 0 1 12.4 4.6" fill="none" stroke="#333" stroke-width="1.5"/><path d="M13.6 1.6 L13.4 6 L9.2 5.6 Z" fill="#333"/><path d="M13.4 8.8 A5.4 5.4 0 0 1 3.6 11.4" fill="none" stroke="#4fb8ea" stroke-width="1.5"/><path d="M2.4 14.4 L2.6 10 L6.8 10.4 Z" fill="#4fb8ea"/></svg>
<div class="a" style="left:589.00px;top:797.00px;width:68.00px;height:23.00px;background:#fff;border:1px solid #cbcbcb;border-radius:4px;box-sizing:border-box;"></div>
<div class="t" style="top:799.35px;font-size:13px;color:#1e1e1e;left:621.00px;">OK</div>
<svg class="a" style="left:606.00px;top:802.00px" width="14" height="14" viewBox="0 0 14 14"><path d="M1.5 7.5 L5 11 L12.5 2.5" fill="none" stroke="#3a3a3a" stroke-width="1.6"/></svg>
<div class="a" style="left:661.00px;top:797.00px;width:100.00px;height:23.00px;background:#fff;border:1px solid #cbcbcb;border-radius:4px;box-sizing:border-box;"></div>
<div class="t" style="top:799.35px;font-size:13px;color:#1e1e1e;left:695.50px;">Закрыть</div>
<svg class="a" style="left:680.60px;top:802.50px" width="12" height="12" viewBox="0 0 12 12"><path d="M1 1 L11 11 M11 1 L1 11" fill="none" stroke="#333" stroke-width="1.5"/></svg>
<div class="a" style="left:9.00px;top:226.00px;width:32.00px;height:297.00px;border:3px solid #f4403f;box-sizing:border-box;"></div>
<div class="a" style="left:9.00px;top:573.00px;width:32.00px;height:96.00px;border:3px solid #f4403f;box-sizing:border-box;"></div>
<div class="a" style="left:1778.00px;top:420.00px;width:178.00px;height:135.00px;border:3px solid #f4403f;box-sizing:border-box;"></div>
<svg class="a" style="left:0;top:0" width="1978" height="838" viewBox="0 0 1978 838"><path d="M1651 780.2 L776 703.3" stroke="#f4403f" stroke-width="2.2" fill="none"/><path d="M767.4 702.2 L778.6 697.2 L777.6 708.6 Z" fill="#f4403f"/><path d="M1847.2 755 L1850.6 563" stroke="#f4403f" stroke-width="2.2" fill="none"/><path d="M1850.9 555.6 L1855.8 564.8 L1846 564.8 Z" fill="#f4403f"/></svg>
<div class="a" style="left:8.20px;top:191.60px;width:34.80px;height:34.80px;border-radius:50%;background:#f94347;"></div>
<div class="t" style="left:8.20px;top:195.30px;width:34.80px;text-align:center;font-size:25px;line-height:28.7px;color:#fff;-webkit-text-stroke:0.35px #fff;">4</div>
<div class="a" style="left:1650.00px;top:773.00px;width:40.00px;height:40.00px;border-radius:50%;background:#f94347;"></div>
<div class="t" style="left:1650.00px;top:776.98px;width:40.00px;text-align:center;font-size:29px;line-height:33.3px;color:#fff;-webkit-text-stroke:0.35px #fff;">3</div>
<div class="a" style="left:1833.90px;top:754.60px;width:35.20px;height:35.20px;border-radius:50%;background:#f94347;"></div>
<div class="t" style="left:1833.90px;top:758.50px;width:35.20px;text-align:center;font-size:25px;line-height:28.7px;color:#fff;-webkit-text-stroke:0.35px #fff;">5</div>
<div class="a" style="left:1742.40px;top:797.80px;width:35.20px;height:35.20px;border-radius:50%;background:#f94347;"></div>
<div class="t" style="left:1742.40px;top:801.70px;width:35.20px;text-align:center;font-size:25px;line-height:28.7px;color:#fff;-webkit-text-stroke:0.35px #fff;">6</div>
</body></html>
